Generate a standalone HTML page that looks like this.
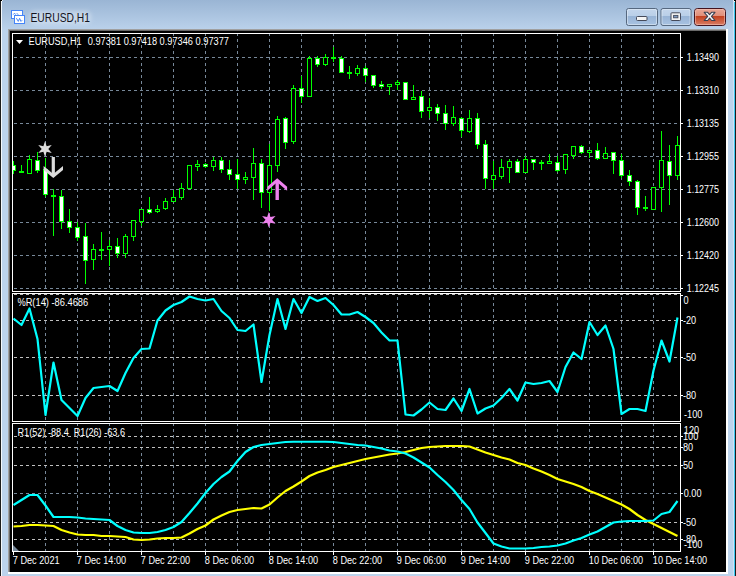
<!DOCTYPE html>
<html><head><meta charset="utf-8"><title>EURUSD,H1</title>
<style>html,body{margin:0;padding:0;background:#000;width:736px;height:576px;overflow:hidden}svg{display:block}text{white-space:pre}</style>
</head><body>
<svg width="736" height="576" viewBox="0 0 736 576" style="position:absolute;left:0;top:0">
<defs>
<linearGradient id="tb" x1="0" y1="0" x2="0" y2="1"><stop offset="0" stop-color="#9ab5d4"/><stop offset="1" stop-color="#bcd3ec"/></linearGradient>
<linearGradient id="btn" x1="0" y1="0" x2="0" y2="1"><stop offset="0" stop-color="#c4d6ec"/><stop offset="0.45" stop-color="#b9cfe8"/><stop offset="0.46" stop-color="#98b4d6"/><stop offset="1" stop-color="#a9c3e2"/></linearGradient>
<linearGradient id="cls" x1="0" y1="0" x2="0" y2="1"><stop offset="0" stop-color="#eaa999"/><stop offset="0.45" stop-color="#e08e78"/><stop offset="0.46" stop-color="#c3411f"/><stop offset="1" stop-color="#da8068"/></linearGradient>
<filter id="glow" x="-20%" y="-80%" width="140%" height="260%"><feGaussianBlur stdDeviation="2.2"/></filter>
<clipPath id="main"><rect x="13" y="34" width="667" height="257"/></clipPath>
<clipPath id="s1"><rect x="13" y="294" width="667" height="127"/></clipPath>
<clipPath id="s2"><rect x="13" y="424" width="667" height="127"/></clipPath>
</defs>
<rect x="0" y="0" width="736" height="576" fill="#000"/>
<rect x="0" y="0" width="736" height="576" fill="#bcd3ec"/>
<rect x="0" y="0" width="736" height="31" fill="url(#tb)"/>
<g shape-rendering="crispEdges">
<rect x="0" y="0" width="1" height="576" fill="#1c1c1c"/>
<rect x="1" y="0" width="1" height="576" fill="#f4f8fc"/>
<rect x="735" y="0" width="1" height="576" fill="#1c1c1c"/>
<rect x="734" y="0" width="1" height="576" fill="#3cc8f0"/>
<rect x="733" y="0" width="1" height="576" fill="#d0e2f4"/>
<rect x="0" y="0" width="2" height="1" fill="#000"/><rect x="1" y="1" width="1" height="1" fill="#fff"/><rect x="2" y="0" width="1" height="1" fill="#e8eef6"/>
<rect x="734" y="0" width="2" height="1" fill="#000"/><rect x="734" y="1" width="1" height="1" fill="#fff"/><rect x="733" y="0" width="1" height="1" fill="#e8eef6"/>
<rect x="8" y="29" width="720" height="545" fill="#fff"/>
<rect x="8" y="29" width="718" height="543" fill="#a0a0a0"/>
<rect x="9" y="30" width="717" height="542" fill="#696969"/>
<rect x="10" y="31" width="716" height="541" fill="#000"/>
</g>
<g shape-rendering="crispEdges" fill="none" stroke-width="1">
<path d="M45.5 34V36M45.5 39V42M45.5 45V48M45.5 51V54M45.5 57V60M45.5 63V66M45.5 69V72M45.5 75V78M45.5 81V84M45.5 87V90M45.5 93V96M45.5 99V102M45.5 105V108M45.5 111V114M45.5 117V120M45.5 123V126M45.5 129V132M45.5 135V138M45.5 141V144M45.5 147V150M45.5 153V156M45.5 159V162M45.5 165V168M45.5 171V174M45.5 177V180M45.5 183V186M45.5 189V192M45.5 195V198M45.5 201V204M45.5 207V210M45.5 213V216M45.5 219V222M45.5 225V228M45.5 231V234M45.5 237V240M45.5 243V246M45.5 249V252M45.5 255V258M45.5 261V264M45.5 267V270M45.5 273V276M45.5 279V282M45.5 285V288" stroke="#778899"/>
<path d="M45.5 297V300M45.5 303V306M45.5 309V312M45.5 315V318M45.5 321V324M45.5 327V330M45.5 333V336M45.5 339V342M45.5 345V348M45.5 351V354M45.5 357V360M45.5 363V366M45.5 369V372M45.5 375V378M45.5 381V384M45.5 387V390M45.5 393V396M45.5 399V402M45.5 405V408M45.5 411V414M45.5 417V420" stroke="#778899"/>
<path d="M45.5 424V426M45.5 429V432M45.5 435V438M45.5 441V444M45.5 447V450M45.5 453V456M45.5 459V462M45.5 465V468M45.5 471V474M45.5 477V480M45.5 483V486M45.5 489V492M45.5 495V498M45.5 501V504M45.5 507V510M45.5 513V516M45.5 519V522M45.5 525V528M45.5 531V534M45.5 537V540M45.5 543V546M45.5 549V551" stroke="#778899"/>
<path d="M77.5 34V36M77.5 39V42M77.5 45V48M77.5 51V54M77.5 57V60M77.5 63V66M77.5 69V72M77.5 75V78M77.5 81V84M77.5 87V90M77.5 93V96M77.5 99V102M77.5 105V108M77.5 111V114M77.5 117V120M77.5 123V126M77.5 129V132M77.5 135V138M77.5 141V144M77.5 147V150M77.5 153V156M77.5 159V162M77.5 165V168M77.5 171V174M77.5 177V180M77.5 183V186M77.5 189V192M77.5 195V198M77.5 201V204M77.5 207V210M77.5 213V216M77.5 219V222M77.5 225V228M77.5 231V234M77.5 237V240M77.5 243V246M77.5 249V252M77.5 255V258M77.5 261V264M77.5 267V270M77.5 273V276M77.5 279V282M77.5 285V288" stroke="#778899"/>
<path d="M77.5 297V300M77.5 303V306M77.5 309V312M77.5 315V318M77.5 321V324M77.5 327V330M77.5 333V336M77.5 339V342M77.5 345V348M77.5 351V354M77.5 357V360M77.5 363V366M77.5 369V372M77.5 375V378M77.5 381V384M77.5 387V390M77.5 393V396M77.5 399V402M77.5 405V408M77.5 411V414M77.5 417V420" stroke="#778899"/>
<path d="M77.5 424V426M77.5 429V432M77.5 435V438M77.5 441V444M77.5 447V450M77.5 453V456M77.5 459V462M77.5 465V468M77.5 471V474M77.5 477V480M77.5 483V486M77.5 489V492M77.5 495V498M77.5 501V504M77.5 507V510M77.5 513V516M77.5 519V522M77.5 525V528M77.5 531V534M77.5 537V540M77.5 543V546M77.5 549V551" stroke="#778899"/>
<path d="M109.5 34V36M109.5 39V42M109.5 45V48M109.5 51V54M109.5 57V60M109.5 63V66M109.5 69V72M109.5 75V78M109.5 81V84M109.5 87V90M109.5 93V96M109.5 99V102M109.5 105V108M109.5 111V114M109.5 117V120M109.5 123V126M109.5 129V132M109.5 135V138M109.5 141V144M109.5 147V150M109.5 153V156M109.5 159V162M109.5 165V168M109.5 171V174M109.5 177V180M109.5 183V186M109.5 189V192M109.5 195V198M109.5 201V204M109.5 207V210M109.5 213V216M109.5 219V222M109.5 225V228M109.5 231V234M109.5 237V240M109.5 243V246M109.5 249V252M109.5 255V258M109.5 261V264M109.5 267V270M109.5 273V276M109.5 279V282M109.5 285V288" stroke="#778899"/>
<path d="M109.5 297V300M109.5 303V306M109.5 309V312M109.5 315V318M109.5 321V324M109.5 327V330M109.5 333V336M109.5 339V342M109.5 345V348M109.5 351V354M109.5 357V360M109.5 363V366M109.5 369V372M109.5 375V378M109.5 381V384M109.5 387V390M109.5 393V396M109.5 399V402M109.5 405V408M109.5 411V414M109.5 417V420" stroke="#778899"/>
<path d="M109.5 424V426M109.5 429V432M109.5 435V438M109.5 441V444M109.5 447V450M109.5 453V456M109.5 459V462M109.5 465V468M109.5 471V474M109.5 477V480M109.5 483V486M109.5 489V492M109.5 495V498M109.5 501V504M109.5 507V510M109.5 513V516M109.5 519V522M109.5 525V528M109.5 531V534M109.5 537V540M109.5 543V546M109.5 549V551" stroke="#778899"/>
<path d="M141.5 34V36M141.5 39V42M141.5 45V48M141.5 51V54M141.5 57V60M141.5 63V66M141.5 69V72M141.5 75V78M141.5 81V84M141.5 87V90M141.5 93V96M141.5 99V102M141.5 105V108M141.5 111V114M141.5 117V120M141.5 123V126M141.5 129V132M141.5 135V138M141.5 141V144M141.5 147V150M141.5 153V156M141.5 159V162M141.5 165V168M141.5 171V174M141.5 177V180M141.5 183V186M141.5 189V192M141.5 195V198M141.5 201V204M141.5 207V210M141.5 213V216M141.5 219V222M141.5 225V228M141.5 231V234M141.5 237V240M141.5 243V246M141.5 249V252M141.5 255V258M141.5 261V264M141.5 267V270M141.5 273V276M141.5 279V282M141.5 285V288" stroke="#778899"/>
<path d="M141.5 297V300M141.5 303V306M141.5 309V312M141.5 315V318M141.5 321V324M141.5 327V330M141.5 333V336M141.5 339V342M141.5 345V348M141.5 351V354M141.5 357V360M141.5 363V366M141.5 369V372M141.5 375V378M141.5 381V384M141.5 387V390M141.5 393V396M141.5 399V402M141.5 405V408M141.5 411V414M141.5 417V420" stroke="#778899"/>
<path d="M141.5 424V426M141.5 429V432M141.5 435V438M141.5 441V444M141.5 447V450M141.5 453V456M141.5 459V462M141.5 465V468M141.5 471V474M141.5 477V480M141.5 483V486M141.5 489V492M141.5 495V498M141.5 501V504M141.5 507V510M141.5 513V516M141.5 519V522M141.5 525V528M141.5 531V534M141.5 537V540M141.5 543V546M141.5 549V551" stroke="#778899"/>
<path d="M173.5 34V36M173.5 39V42M173.5 45V48M173.5 51V54M173.5 57V60M173.5 63V66M173.5 69V72M173.5 75V78M173.5 81V84M173.5 87V90M173.5 93V96M173.5 99V102M173.5 105V108M173.5 111V114M173.5 117V120M173.5 123V126M173.5 129V132M173.5 135V138M173.5 141V144M173.5 147V150M173.5 153V156M173.5 159V162M173.5 165V168M173.5 171V174M173.5 177V180M173.5 183V186M173.5 189V192M173.5 195V198M173.5 201V204M173.5 207V210M173.5 213V216M173.5 219V222M173.5 225V228M173.5 231V234M173.5 237V240M173.5 243V246M173.5 249V252M173.5 255V258M173.5 261V264M173.5 267V270M173.5 273V276M173.5 279V282M173.5 285V288" stroke="#778899"/>
<path d="M173.5 297V300M173.5 303V306M173.5 309V312M173.5 315V318M173.5 321V324M173.5 327V330M173.5 333V336M173.5 339V342M173.5 345V348M173.5 351V354M173.5 357V360M173.5 363V366M173.5 369V372M173.5 375V378M173.5 381V384M173.5 387V390M173.5 393V396M173.5 399V402M173.5 405V408M173.5 411V414M173.5 417V420" stroke="#778899"/>
<path d="M173.5 424V426M173.5 429V432M173.5 435V438M173.5 441V444M173.5 447V450M173.5 453V456M173.5 459V462M173.5 465V468M173.5 471V474M173.5 477V480M173.5 483V486M173.5 489V492M173.5 495V498M173.5 501V504M173.5 507V510M173.5 513V516M173.5 519V522M173.5 525V528M173.5 531V534M173.5 537V540M173.5 543V546M173.5 549V551" stroke="#778899"/>
<path d="M205.5 34V36M205.5 39V42M205.5 45V48M205.5 51V54M205.5 57V60M205.5 63V66M205.5 69V72M205.5 75V78M205.5 81V84M205.5 87V90M205.5 93V96M205.5 99V102M205.5 105V108M205.5 111V114M205.5 117V120M205.5 123V126M205.5 129V132M205.5 135V138M205.5 141V144M205.5 147V150M205.5 153V156M205.5 159V162M205.5 165V168M205.5 171V174M205.5 177V180M205.5 183V186M205.5 189V192M205.5 195V198M205.5 201V204M205.5 207V210M205.5 213V216M205.5 219V222M205.5 225V228M205.5 231V234M205.5 237V240M205.5 243V246M205.5 249V252M205.5 255V258M205.5 261V264M205.5 267V270M205.5 273V276M205.5 279V282M205.5 285V288" stroke="#778899"/>
<path d="M205.5 297V300M205.5 303V306M205.5 309V312M205.5 315V318M205.5 321V324M205.5 327V330M205.5 333V336M205.5 339V342M205.5 345V348M205.5 351V354M205.5 357V360M205.5 363V366M205.5 369V372M205.5 375V378M205.5 381V384M205.5 387V390M205.5 393V396M205.5 399V402M205.5 405V408M205.5 411V414M205.5 417V420" stroke="#778899"/>
<path d="M205.5 424V426M205.5 429V432M205.5 435V438M205.5 441V444M205.5 447V450M205.5 453V456M205.5 459V462M205.5 465V468M205.5 471V474M205.5 477V480M205.5 483V486M205.5 489V492M205.5 495V498M205.5 501V504M205.5 507V510M205.5 513V516M205.5 519V522M205.5 525V528M205.5 531V534M205.5 537V540M205.5 543V546M205.5 549V551" stroke="#778899"/>
<path d="M237.5 34V36M237.5 39V42M237.5 45V48M237.5 51V54M237.5 57V60M237.5 63V66M237.5 69V72M237.5 75V78M237.5 81V84M237.5 87V90M237.5 93V96M237.5 99V102M237.5 105V108M237.5 111V114M237.5 117V120M237.5 123V126M237.5 129V132M237.5 135V138M237.5 141V144M237.5 147V150M237.5 153V156M237.5 159V162M237.5 165V168M237.5 171V174M237.5 177V180M237.5 183V186M237.5 189V192M237.5 195V198M237.5 201V204M237.5 207V210M237.5 213V216M237.5 219V222M237.5 225V228M237.5 231V234M237.5 237V240M237.5 243V246M237.5 249V252M237.5 255V258M237.5 261V264M237.5 267V270M237.5 273V276M237.5 279V282M237.5 285V288" stroke="#778899"/>
<path d="M237.5 297V300M237.5 303V306M237.5 309V312M237.5 315V318M237.5 321V324M237.5 327V330M237.5 333V336M237.5 339V342M237.5 345V348M237.5 351V354M237.5 357V360M237.5 363V366M237.5 369V372M237.5 375V378M237.5 381V384M237.5 387V390M237.5 393V396M237.5 399V402M237.5 405V408M237.5 411V414M237.5 417V420" stroke="#778899"/>
<path d="M237.5 424V426M237.5 429V432M237.5 435V438M237.5 441V444M237.5 447V450M237.5 453V456M237.5 459V462M237.5 465V468M237.5 471V474M237.5 477V480M237.5 483V486M237.5 489V492M237.5 495V498M237.5 501V504M237.5 507V510M237.5 513V516M237.5 519V522M237.5 525V528M237.5 531V534M237.5 537V540M237.5 543V546M237.5 549V551" stroke="#778899"/>
<path d="M269.5 34V36M269.5 39V42M269.5 45V48M269.5 51V54M269.5 57V60M269.5 63V66M269.5 69V72M269.5 75V78M269.5 81V84M269.5 87V90M269.5 93V96M269.5 99V102M269.5 105V108M269.5 111V114M269.5 117V120M269.5 123V126M269.5 129V132M269.5 135V138M269.5 141V144M269.5 147V150M269.5 153V156M269.5 159V162M269.5 165V168M269.5 171V174M269.5 177V180M269.5 183V186M269.5 189V192M269.5 195V198M269.5 201V204M269.5 207V210M269.5 213V216M269.5 219V222M269.5 225V228M269.5 231V234M269.5 237V240M269.5 243V246M269.5 249V252M269.5 255V258M269.5 261V264M269.5 267V270M269.5 273V276M269.5 279V282M269.5 285V288" stroke="#778899"/>
<path d="M269.5 297V300M269.5 303V306M269.5 309V312M269.5 315V318M269.5 321V324M269.5 327V330M269.5 333V336M269.5 339V342M269.5 345V348M269.5 351V354M269.5 357V360M269.5 363V366M269.5 369V372M269.5 375V378M269.5 381V384M269.5 387V390M269.5 393V396M269.5 399V402M269.5 405V408M269.5 411V414M269.5 417V420" stroke="#778899"/>
<path d="M269.5 424V426M269.5 429V432M269.5 435V438M269.5 441V444M269.5 447V450M269.5 453V456M269.5 459V462M269.5 465V468M269.5 471V474M269.5 477V480M269.5 483V486M269.5 489V492M269.5 495V498M269.5 501V504M269.5 507V510M269.5 513V516M269.5 519V522M269.5 525V528M269.5 531V534M269.5 537V540M269.5 543V546M269.5 549V551" stroke="#778899"/>
<path d="M301.5 34V36M301.5 39V42M301.5 45V48M301.5 51V54M301.5 57V60M301.5 63V66M301.5 69V72M301.5 75V78M301.5 81V84M301.5 87V90M301.5 93V96M301.5 99V102M301.5 105V108M301.5 111V114M301.5 117V120M301.5 123V126M301.5 129V132M301.5 135V138M301.5 141V144M301.5 147V150M301.5 153V156M301.5 159V162M301.5 165V168M301.5 171V174M301.5 177V180M301.5 183V186M301.5 189V192M301.5 195V198M301.5 201V204M301.5 207V210M301.5 213V216M301.5 219V222M301.5 225V228M301.5 231V234M301.5 237V240M301.5 243V246M301.5 249V252M301.5 255V258M301.5 261V264M301.5 267V270M301.5 273V276M301.5 279V282M301.5 285V288" stroke="#778899"/>
<path d="M301.5 297V300M301.5 303V306M301.5 309V312M301.5 315V318M301.5 321V324M301.5 327V330M301.5 333V336M301.5 339V342M301.5 345V348M301.5 351V354M301.5 357V360M301.5 363V366M301.5 369V372M301.5 375V378M301.5 381V384M301.5 387V390M301.5 393V396M301.5 399V402M301.5 405V408M301.5 411V414M301.5 417V420" stroke="#778899"/>
<path d="M301.5 424V426M301.5 429V432M301.5 435V438M301.5 441V444M301.5 447V450M301.5 453V456M301.5 459V462M301.5 465V468M301.5 471V474M301.5 477V480M301.5 483V486M301.5 489V492M301.5 495V498M301.5 501V504M301.5 507V510M301.5 513V516M301.5 519V522M301.5 525V528M301.5 531V534M301.5 537V540M301.5 543V546M301.5 549V551" stroke="#778899"/>
<path d="M333.5 34V36M333.5 39V42M333.5 45V48M333.5 51V54M333.5 57V60M333.5 63V66M333.5 69V72M333.5 75V78M333.5 81V84M333.5 87V90M333.5 93V96M333.5 99V102M333.5 105V108M333.5 111V114M333.5 117V120M333.5 123V126M333.5 129V132M333.5 135V138M333.5 141V144M333.5 147V150M333.5 153V156M333.5 159V162M333.5 165V168M333.5 171V174M333.5 177V180M333.5 183V186M333.5 189V192M333.5 195V198M333.5 201V204M333.5 207V210M333.5 213V216M333.5 219V222M333.5 225V228M333.5 231V234M333.5 237V240M333.5 243V246M333.5 249V252M333.5 255V258M333.5 261V264M333.5 267V270M333.5 273V276M333.5 279V282M333.5 285V288" stroke="#778899"/>
<path d="M333.5 297V300M333.5 303V306M333.5 309V312M333.5 315V318M333.5 321V324M333.5 327V330M333.5 333V336M333.5 339V342M333.5 345V348M333.5 351V354M333.5 357V360M333.5 363V366M333.5 369V372M333.5 375V378M333.5 381V384M333.5 387V390M333.5 393V396M333.5 399V402M333.5 405V408M333.5 411V414M333.5 417V420" stroke="#778899"/>
<path d="M333.5 424V426M333.5 429V432M333.5 435V438M333.5 441V444M333.5 447V450M333.5 453V456M333.5 459V462M333.5 465V468M333.5 471V474M333.5 477V480M333.5 483V486M333.5 489V492M333.5 495V498M333.5 501V504M333.5 507V510M333.5 513V516M333.5 519V522M333.5 525V528M333.5 531V534M333.5 537V540M333.5 543V546M333.5 549V551" stroke="#778899"/>
<path d="M365.5 34V36M365.5 39V42M365.5 45V48M365.5 51V54M365.5 57V60M365.5 63V66M365.5 69V72M365.5 75V78M365.5 81V84M365.5 87V90M365.5 93V96M365.5 99V102M365.5 105V108M365.5 111V114M365.5 117V120M365.5 123V126M365.5 129V132M365.5 135V138M365.5 141V144M365.5 147V150M365.5 153V156M365.5 159V162M365.5 165V168M365.5 171V174M365.5 177V180M365.5 183V186M365.5 189V192M365.5 195V198M365.5 201V204M365.5 207V210M365.5 213V216M365.5 219V222M365.5 225V228M365.5 231V234M365.5 237V240M365.5 243V246M365.5 249V252M365.5 255V258M365.5 261V264M365.5 267V270M365.5 273V276M365.5 279V282M365.5 285V288" stroke="#778899"/>
<path d="M365.5 297V300M365.5 303V306M365.5 309V312M365.5 315V318M365.5 321V324M365.5 327V330M365.5 333V336M365.5 339V342M365.5 345V348M365.5 351V354M365.5 357V360M365.5 363V366M365.5 369V372M365.5 375V378M365.5 381V384M365.5 387V390M365.5 393V396M365.5 399V402M365.5 405V408M365.5 411V414M365.5 417V420" stroke="#778899"/>
<path d="M365.5 424V426M365.5 429V432M365.5 435V438M365.5 441V444M365.5 447V450M365.5 453V456M365.5 459V462M365.5 465V468M365.5 471V474M365.5 477V480M365.5 483V486M365.5 489V492M365.5 495V498M365.5 501V504M365.5 507V510M365.5 513V516M365.5 519V522M365.5 525V528M365.5 531V534M365.5 537V540M365.5 543V546M365.5 549V551" stroke="#778899"/>
<path d="M397.5 34V36M397.5 39V42M397.5 45V48M397.5 51V54M397.5 57V60M397.5 63V66M397.5 69V72M397.5 75V78M397.5 81V84M397.5 87V90M397.5 93V96M397.5 99V102M397.5 105V108M397.5 111V114M397.5 117V120M397.5 123V126M397.5 129V132M397.5 135V138M397.5 141V144M397.5 147V150M397.5 153V156M397.5 159V162M397.5 165V168M397.5 171V174M397.5 177V180M397.5 183V186M397.5 189V192M397.5 195V198M397.5 201V204M397.5 207V210M397.5 213V216M397.5 219V222M397.5 225V228M397.5 231V234M397.5 237V240M397.5 243V246M397.5 249V252M397.5 255V258M397.5 261V264M397.5 267V270M397.5 273V276M397.5 279V282M397.5 285V288" stroke="#778899"/>
<path d="M397.5 297V300M397.5 303V306M397.5 309V312M397.5 315V318M397.5 321V324M397.5 327V330M397.5 333V336M397.5 339V342M397.5 345V348M397.5 351V354M397.5 357V360M397.5 363V366M397.5 369V372M397.5 375V378M397.5 381V384M397.5 387V390M397.5 393V396M397.5 399V402M397.5 405V408M397.5 411V414M397.5 417V420" stroke="#778899"/>
<path d="M397.5 424V426M397.5 429V432M397.5 435V438M397.5 441V444M397.5 447V450M397.5 453V456M397.5 459V462M397.5 465V468M397.5 471V474M397.5 477V480M397.5 483V486M397.5 489V492M397.5 495V498M397.5 501V504M397.5 507V510M397.5 513V516M397.5 519V522M397.5 525V528M397.5 531V534M397.5 537V540M397.5 543V546M397.5 549V551" stroke="#778899"/>
<path d="M429.5 34V36M429.5 39V42M429.5 45V48M429.5 51V54M429.5 57V60M429.5 63V66M429.5 69V72M429.5 75V78M429.5 81V84M429.5 87V90M429.5 93V96M429.5 99V102M429.5 105V108M429.5 111V114M429.5 117V120M429.5 123V126M429.5 129V132M429.5 135V138M429.5 141V144M429.5 147V150M429.5 153V156M429.5 159V162M429.5 165V168M429.5 171V174M429.5 177V180M429.5 183V186M429.5 189V192M429.5 195V198M429.5 201V204M429.5 207V210M429.5 213V216M429.5 219V222M429.5 225V228M429.5 231V234M429.5 237V240M429.5 243V246M429.5 249V252M429.5 255V258M429.5 261V264M429.5 267V270M429.5 273V276M429.5 279V282M429.5 285V288" stroke="#778899"/>
<path d="M429.5 297V300M429.5 303V306M429.5 309V312M429.5 315V318M429.5 321V324M429.5 327V330M429.5 333V336M429.5 339V342M429.5 345V348M429.5 351V354M429.5 357V360M429.5 363V366M429.5 369V372M429.5 375V378M429.5 381V384M429.5 387V390M429.5 393V396M429.5 399V402M429.5 405V408M429.5 411V414M429.5 417V420" stroke="#778899"/>
<path d="M429.5 424V426M429.5 429V432M429.5 435V438M429.5 441V444M429.5 447V450M429.5 453V456M429.5 459V462M429.5 465V468M429.5 471V474M429.5 477V480M429.5 483V486M429.5 489V492M429.5 495V498M429.5 501V504M429.5 507V510M429.5 513V516M429.5 519V522M429.5 525V528M429.5 531V534M429.5 537V540M429.5 543V546M429.5 549V551" stroke="#778899"/>
<path d="M461.5 34V36M461.5 39V42M461.5 45V48M461.5 51V54M461.5 57V60M461.5 63V66M461.5 69V72M461.5 75V78M461.5 81V84M461.5 87V90M461.5 93V96M461.5 99V102M461.5 105V108M461.5 111V114M461.5 117V120M461.5 123V126M461.5 129V132M461.5 135V138M461.5 141V144M461.5 147V150M461.5 153V156M461.5 159V162M461.5 165V168M461.5 171V174M461.5 177V180M461.5 183V186M461.5 189V192M461.5 195V198M461.5 201V204M461.5 207V210M461.5 213V216M461.5 219V222M461.5 225V228M461.5 231V234M461.5 237V240M461.5 243V246M461.5 249V252M461.5 255V258M461.5 261V264M461.5 267V270M461.5 273V276M461.5 279V282M461.5 285V288" stroke="#778899"/>
<path d="M461.5 297V300M461.5 303V306M461.5 309V312M461.5 315V318M461.5 321V324M461.5 327V330M461.5 333V336M461.5 339V342M461.5 345V348M461.5 351V354M461.5 357V360M461.5 363V366M461.5 369V372M461.5 375V378M461.5 381V384M461.5 387V390M461.5 393V396M461.5 399V402M461.5 405V408M461.5 411V414M461.5 417V420" stroke="#778899"/>
<path d="M461.5 424V426M461.5 429V432M461.5 435V438M461.5 441V444M461.5 447V450M461.5 453V456M461.5 459V462M461.5 465V468M461.5 471V474M461.5 477V480M461.5 483V486M461.5 489V492M461.5 495V498M461.5 501V504M461.5 507V510M461.5 513V516M461.5 519V522M461.5 525V528M461.5 531V534M461.5 537V540M461.5 543V546M461.5 549V551" stroke="#778899"/>
<path d="M493.5 34V36M493.5 39V42M493.5 45V48M493.5 51V54M493.5 57V60M493.5 63V66M493.5 69V72M493.5 75V78M493.5 81V84M493.5 87V90M493.5 93V96M493.5 99V102M493.5 105V108M493.5 111V114M493.5 117V120M493.5 123V126M493.5 129V132M493.5 135V138M493.5 141V144M493.5 147V150M493.5 153V156M493.5 159V162M493.5 165V168M493.5 171V174M493.5 177V180M493.5 183V186M493.5 189V192M493.5 195V198M493.5 201V204M493.5 207V210M493.5 213V216M493.5 219V222M493.5 225V228M493.5 231V234M493.5 237V240M493.5 243V246M493.5 249V252M493.5 255V258M493.5 261V264M493.5 267V270M493.5 273V276M493.5 279V282M493.5 285V288" stroke="#778899"/>
<path d="M493.5 297V300M493.5 303V306M493.5 309V312M493.5 315V318M493.5 321V324M493.5 327V330M493.5 333V336M493.5 339V342M493.5 345V348M493.5 351V354M493.5 357V360M493.5 363V366M493.5 369V372M493.5 375V378M493.5 381V384M493.5 387V390M493.5 393V396M493.5 399V402M493.5 405V408M493.5 411V414M493.5 417V420" stroke="#778899"/>
<path d="M493.5 424V426M493.5 429V432M493.5 435V438M493.5 441V444M493.5 447V450M493.5 453V456M493.5 459V462M493.5 465V468M493.5 471V474M493.5 477V480M493.5 483V486M493.5 489V492M493.5 495V498M493.5 501V504M493.5 507V510M493.5 513V516M493.5 519V522M493.5 525V528M493.5 531V534M493.5 537V540M493.5 543V546M493.5 549V551" stroke="#778899"/>
<path d="M525.5 34V36M525.5 39V42M525.5 45V48M525.5 51V54M525.5 57V60M525.5 63V66M525.5 69V72M525.5 75V78M525.5 81V84M525.5 87V90M525.5 93V96M525.5 99V102M525.5 105V108M525.5 111V114M525.5 117V120M525.5 123V126M525.5 129V132M525.5 135V138M525.5 141V144M525.5 147V150M525.5 153V156M525.5 159V162M525.5 165V168M525.5 171V174M525.5 177V180M525.5 183V186M525.5 189V192M525.5 195V198M525.5 201V204M525.5 207V210M525.5 213V216M525.5 219V222M525.5 225V228M525.5 231V234M525.5 237V240M525.5 243V246M525.5 249V252M525.5 255V258M525.5 261V264M525.5 267V270M525.5 273V276M525.5 279V282M525.5 285V288" stroke="#778899"/>
<path d="M525.5 297V300M525.5 303V306M525.5 309V312M525.5 315V318M525.5 321V324M525.5 327V330M525.5 333V336M525.5 339V342M525.5 345V348M525.5 351V354M525.5 357V360M525.5 363V366M525.5 369V372M525.5 375V378M525.5 381V384M525.5 387V390M525.5 393V396M525.5 399V402M525.5 405V408M525.5 411V414M525.5 417V420" stroke="#778899"/>
<path d="M525.5 424V426M525.5 429V432M525.5 435V438M525.5 441V444M525.5 447V450M525.5 453V456M525.5 459V462M525.5 465V468M525.5 471V474M525.5 477V480M525.5 483V486M525.5 489V492M525.5 495V498M525.5 501V504M525.5 507V510M525.5 513V516M525.5 519V522M525.5 525V528M525.5 531V534M525.5 537V540M525.5 543V546M525.5 549V551" stroke="#778899"/>
<path d="M557.5 34V36M557.5 39V42M557.5 45V48M557.5 51V54M557.5 57V60M557.5 63V66M557.5 69V72M557.5 75V78M557.5 81V84M557.5 87V90M557.5 93V96M557.5 99V102M557.5 105V108M557.5 111V114M557.5 117V120M557.5 123V126M557.5 129V132M557.5 135V138M557.5 141V144M557.5 147V150M557.5 153V156M557.5 159V162M557.5 165V168M557.5 171V174M557.5 177V180M557.5 183V186M557.5 189V192M557.5 195V198M557.5 201V204M557.5 207V210M557.5 213V216M557.5 219V222M557.5 225V228M557.5 231V234M557.5 237V240M557.5 243V246M557.5 249V252M557.5 255V258M557.5 261V264M557.5 267V270M557.5 273V276M557.5 279V282M557.5 285V288" stroke="#778899"/>
<path d="M557.5 297V300M557.5 303V306M557.5 309V312M557.5 315V318M557.5 321V324M557.5 327V330M557.5 333V336M557.5 339V342M557.5 345V348M557.5 351V354M557.5 357V360M557.5 363V366M557.5 369V372M557.5 375V378M557.5 381V384M557.5 387V390M557.5 393V396M557.5 399V402M557.5 405V408M557.5 411V414M557.5 417V420" stroke="#778899"/>
<path d="M557.5 424V426M557.5 429V432M557.5 435V438M557.5 441V444M557.5 447V450M557.5 453V456M557.5 459V462M557.5 465V468M557.5 471V474M557.5 477V480M557.5 483V486M557.5 489V492M557.5 495V498M557.5 501V504M557.5 507V510M557.5 513V516M557.5 519V522M557.5 525V528M557.5 531V534M557.5 537V540M557.5 543V546M557.5 549V551" stroke="#778899"/>
<path d="M589.5 34V36M589.5 39V42M589.5 45V48M589.5 51V54M589.5 57V60M589.5 63V66M589.5 69V72M589.5 75V78M589.5 81V84M589.5 87V90M589.5 93V96M589.5 99V102M589.5 105V108M589.5 111V114M589.5 117V120M589.5 123V126M589.5 129V132M589.5 135V138M589.5 141V144M589.5 147V150M589.5 153V156M589.5 159V162M589.5 165V168M589.5 171V174M589.5 177V180M589.5 183V186M589.5 189V192M589.5 195V198M589.5 201V204M589.5 207V210M589.5 213V216M589.5 219V222M589.5 225V228M589.5 231V234M589.5 237V240M589.5 243V246M589.5 249V252M589.5 255V258M589.5 261V264M589.5 267V270M589.5 273V276M589.5 279V282M589.5 285V288" stroke="#778899"/>
<path d="M589.5 297V300M589.5 303V306M589.5 309V312M589.5 315V318M589.5 321V324M589.5 327V330M589.5 333V336M589.5 339V342M589.5 345V348M589.5 351V354M589.5 357V360M589.5 363V366M589.5 369V372M589.5 375V378M589.5 381V384M589.5 387V390M589.5 393V396M589.5 399V402M589.5 405V408M589.5 411V414M589.5 417V420" stroke="#778899"/>
<path d="M589.5 424V426M589.5 429V432M589.5 435V438M589.5 441V444M589.5 447V450M589.5 453V456M589.5 459V462M589.5 465V468M589.5 471V474M589.5 477V480M589.5 483V486M589.5 489V492M589.5 495V498M589.5 501V504M589.5 507V510M589.5 513V516M589.5 519V522M589.5 525V528M589.5 531V534M589.5 537V540M589.5 543V546M589.5 549V551" stroke="#778899"/>
<path d="M621.5 34V36M621.5 39V42M621.5 45V48M621.5 51V54M621.5 57V60M621.5 63V66M621.5 69V72M621.5 75V78M621.5 81V84M621.5 87V90M621.5 93V96M621.5 99V102M621.5 105V108M621.5 111V114M621.5 117V120M621.5 123V126M621.5 129V132M621.5 135V138M621.5 141V144M621.5 147V150M621.5 153V156M621.5 159V162M621.5 165V168M621.5 171V174M621.5 177V180M621.5 183V186M621.5 189V192M621.5 195V198M621.5 201V204M621.5 207V210M621.5 213V216M621.5 219V222M621.5 225V228M621.5 231V234M621.5 237V240M621.5 243V246M621.5 249V252M621.5 255V258M621.5 261V264M621.5 267V270M621.5 273V276M621.5 279V282M621.5 285V288" stroke="#778899"/>
<path d="M621.5 297V300M621.5 303V306M621.5 309V312M621.5 315V318M621.5 321V324M621.5 327V330M621.5 333V336M621.5 339V342M621.5 345V348M621.5 351V354M621.5 357V360M621.5 363V366M621.5 369V372M621.5 375V378M621.5 381V384M621.5 387V390M621.5 393V396M621.5 399V402M621.5 405V408M621.5 411V414M621.5 417V420" stroke="#778899"/>
<path d="M621.5 424V426M621.5 429V432M621.5 435V438M621.5 441V444M621.5 447V450M621.5 453V456M621.5 459V462M621.5 465V468M621.5 471V474M621.5 477V480M621.5 483V486M621.5 489V492M621.5 495V498M621.5 501V504M621.5 507V510M621.5 513V516M621.5 519V522M621.5 525V528M621.5 531V534M621.5 537V540M621.5 543V546M621.5 549V551" stroke="#778899"/>
<path d="M653.5 34V36M653.5 39V42M653.5 45V48M653.5 51V54M653.5 57V60M653.5 63V66M653.5 69V72M653.5 75V78M653.5 81V84M653.5 87V90M653.5 93V96M653.5 99V102M653.5 105V108M653.5 111V114M653.5 117V120M653.5 123V126M653.5 129V132M653.5 135V138M653.5 141V144M653.5 147V150M653.5 153V156M653.5 159V162M653.5 165V168M653.5 171V174M653.5 177V180M653.5 183V186M653.5 189V192M653.5 195V198M653.5 201V204M653.5 207V210M653.5 213V216M653.5 219V222M653.5 225V228M653.5 231V234M653.5 237V240M653.5 243V246M653.5 249V252M653.5 255V258M653.5 261V264M653.5 267V270M653.5 273V276M653.5 279V282M653.5 285V288" stroke="#778899"/>
<path d="M653.5 297V300M653.5 303V306M653.5 309V312M653.5 315V318M653.5 321V324M653.5 327V330M653.5 333V336M653.5 339V342M653.5 345V348M653.5 351V354M653.5 357V360M653.5 363V366M653.5 369V372M653.5 375V378M653.5 381V384M653.5 387V390M653.5 393V396M653.5 399V402M653.5 405V408M653.5 411V414M653.5 417V420" stroke="#778899"/>
<path d="M653.5 424V426M653.5 429V432M653.5 435V438M653.5 441V444M653.5 447V450M653.5 453V456M653.5 459V462M653.5 465V468M653.5 471V474M653.5 477V480M653.5 483V486M653.5 489V492M653.5 495V498M653.5 501V504M653.5 507V510M653.5 513V516M653.5 519V522M653.5 525V528M653.5 531V534M653.5 537V540M653.5 543V546M653.5 549V551" stroke="#778899"/>
<path d="M14 57.5H17M20 57.5H23M26 57.5H29M32 57.5H35M38 57.5H41M44 57.5H47M50 57.5H53M56 57.5H59M62 57.5H65M68 57.5H71M74 57.5H77M80 57.5H83M86 57.5H89M92 57.5H95M98 57.5H101M104 57.5H107M110 57.5H113M116 57.5H119M122 57.5H125M128 57.5H131M134 57.5H137M140 57.5H143M146 57.5H149M152 57.5H155M158 57.5H161M164 57.5H167M170 57.5H173M176 57.5H179M182 57.5H185M188 57.5H191M194 57.5H197M200 57.5H203M206 57.5H209M212 57.5H215M218 57.5H221M224 57.5H227M230 57.5H233M236 57.5H239M242 57.5H245M248 57.5H251M254 57.5H257M260 57.5H263M266 57.5H269M272 57.5H275M278 57.5H281M284 57.5H287M290 57.5H293M296 57.5H299M302 57.5H305M308 57.5H311M314 57.5H317M320 57.5H323M326 57.5H329M332 57.5H335M338 57.5H341M344 57.5H347M350 57.5H353M356 57.5H359M362 57.5H365M368 57.5H371M374 57.5H377M380 57.5H383M386 57.5H389M392 57.5H395M398 57.5H401M404 57.5H407M410 57.5H413M416 57.5H419M422 57.5H425M428 57.5H431M434 57.5H437M440 57.5H443M446 57.5H449M452 57.5H455M458 57.5H461M464 57.5H467M470 57.5H473M476 57.5H479M482 57.5H485M488 57.5H491M494 57.5H497M500 57.5H503M506 57.5H509M512 57.5H515M518 57.5H521M524 57.5H527M530 57.5H533M536 57.5H539M542 57.5H545M548 57.5H551M554 57.5H557M560 57.5H563M566 57.5H569M572 57.5H575M578 57.5H581M584 57.5H587M590 57.5H593M596 57.5H599M602 57.5H605M608 57.5H611M614 57.5H617M620 57.5H623M626 57.5H629M632 57.5H635M638 57.5H641M644 57.5H647M650 57.5H653M656 57.5H659M662 57.5H665M668 57.5H671M674 57.5H677" stroke="#778899"/>
<path d="M14 90.5H17M20 90.5H23M26 90.5H29M32 90.5H35M38 90.5H41M44 90.5H47M50 90.5H53M56 90.5H59M62 90.5H65M68 90.5H71M74 90.5H77M80 90.5H83M86 90.5H89M92 90.5H95M98 90.5H101M104 90.5H107M110 90.5H113M116 90.5H119M122 90.5H125M128 90.5H131M134 90.5H137M140 90.5H143M146 90.5H149M152 90.5H155M158 90.5H161M164 90.5H167M170 90.5H173M176 90.5H179M182 90.5H185M188 90.5H191M194 90.5H197M200 90.5H203M206 90.5H209M212 90.5H215M218 90.5H221M224 90.5H227M230 90.5H233M236 90.5H239M242 90.5H245M248 90.5H251M254 90.5H257M260 90.5H263M266 90.5H269M272 90.5H275M278 90.5H281M284 90.5H287M290 90.5H293M296 90.5H299M302 90.5H305M308 90.5H311M314 90.5H317M320 90.5H323M326 90.5H329M332 90.5H335M338 90.5H341M344 90.5H347M350 90.5H353M356 90.5H359M362 90.5H365M368 90.5H371M374 90.5H377M380 90.5H383M386 90.5H389M392 90.5H395M398 90.5H401M404 90.5H407M410 90.5H413M416 90.5H419M422 90.5H425M428 90.5H431M434 90.5H437M440 90.5H443M446 90.5H449M452 90.5H455M458 90.5H461M464 90.5H467M470 90.5H473M476 90.5H479M482 90.5H485M488 90.5H491M494 90.5H497M500 90.5H503M506 90.5H509M512 90.5H515M518 90.5H521M524 90.5H527M530 90.5H533M536 90.5H539M542 90.5H545M548 90.5H551M554 90.5H557M560 90.5H563M566 90.5H569M572 90.5H575M578 90.5H581M584 90.5H587M590 90.5H593M596 90.5H599M602 90.5H605M608 90.5H611M614 90.5H617M620 90.5H623M626 90.5H629M632 90.5H635M638 90.5H641M644 90.5H647M650 90.5H653M656 90.5H659M662 90.5H665M668 90.5H671M674 90.5H677" stroke="#778899"/>
<path d="M14 123.5H17M20 123.5H23M26 123.5H29M32 123.5H35M38 123.5H41M44 123.5H47M50 123.5H53M56 123.5H59M62 123.5H65M68 123.5H71M74 123.5H77M80 123.5H83M86 123.5H89M92 123.5H95M98 123.5H101M104 123.5H107M110 123.5H113M116 123.5H119M122 123.5H125M128 123.5H131M134 123.5H137M140 123.5H143M146 123.5H149M152 123.5H155M158 123.5H161M164 123.5H167M170 123.5H173M176 123.5H179M182 123.5H185M188 123.5H191M194 123.5H197M200 123.5H203M206 123.5H209M212 123.5H215M218 123.5H221M224 123.5H227M230 123.5H233M236 123.5H239M242 123.5H245M248 123.5H251M254 123.5H257M260 123.5H263M266 123.5H269M272 123.5H275M278 123.5H281M284 123.5H287M290 123.5H293M296 123.5H299M302 123.5H305M308 123.5H311M314 123.5H317M320 123.5H323M326 123.5H329M332 123.5H335M338 123.5H341M344 123.5H347M350 123.5H353M356 123.5H359M362 123.5H365M368 123.5H371M374 123.5H377M380 123.5H383M386 123.5H389M392 123.5H395M398 123.5H401M404 123.5H407M410 123.5H413M416 123.5H419M422 123.5H425M428 123.5H431M434 123.5H437M440 123.5H443M446 123.5H449M452 123.5H455M458 123.5H461M464 123.5H467M470 123.5H473M476 123.5H479M482 123.5H485M488 123.5H491M494 123.5H497M500 123.5H503M506 123.5H509M512 123.5H515M518 123.5H521M524 123.5H527M530 123.5H533M536 123.5H539M542 123.5H545M548 123.5H551M554 123.5H557M560 123.5H563M566 123.5H569M572 123.5H575M578 123.5H581M584 123.5H587M590 123.5H593M596 123.5H599M602 123.5H605M608 123.5H611M614 123.5H617M620 123.5H623M626 123.5H629M632 123.5H635M638 123.5H641M644 123.5H647M650 123.5H653M656 123.5H659M662 123.5H665M668 123.5H671M674 123.5H677" stroke="#778899"/>
<path d="M14 156.5H17M20 156.5H23M26 156.5H29M32 156.5H35M38 156.5H41M44 156.5H47M50 156.5H53M56 156.5H59M62 156.5H65M68 156.5H71M74 156.5H77M80 156.5H83M86 156.5H89M92 156.5H95M98 156.5H101M104 156.5H107M110 156.5H113M116 156.5H119M122 156.5H125M128 156.5H131M134 156.5H137M140 156.5H143M146 156.5H149M152 156.5H155M158 156.5H161M164 156.5H167M170 156.5H173M176 156.5H179M182 156.5H185M188 156.5H191M194 156.5H197M200 156.5H203M206 156.5H209M212 156.5H215M218 156.5H221M224 156.5H227M230 156.5H233M236 156.5H239M242 156.5H245M248 156.5H251M254 156.5H257M260 156.5H263M266 156.5H269M272 156.5H275M278 156.5H281M284 156.5H287M290 156.5H293M296 156.5H299M302 156.5H305M308 156.5H311M314 156.5H317M320 156.5H323M326 156.5H329M332 156.5H335M338 156.5H341M344 156.5H347M350 156.5H353M356 156.5H359M362 156.5H365M368 156.5H371M374 156.5H377M380 156.5H383M386 156.5H389M392 156.5H395M398 156.5H401M404 156.5H407M410 156.5H413M416 156.5H419M422 156.5H425M428 156.5H431M434 156.5H437M440 156.5H443M446 156.5H449M452 156.5H455M458 156.5H461M464 156.5H467M470 156.5H473M476 156.5H479M482 156.5H485M488 156.5H491M494 156.5H497M500 156.5H503M506 156.5H509M512 156.5H515M518 156.5H521M524 156.5H527M530 156.5H533M536 156.5H539M542 156.5H545M548 156.5H551M554 156.5H557M560 156.5H563M566 156.5H569M572 156.5H575M578 156.5H581M584 156.5H587M590 156.5H593M596 156.5H599M602 156.5H605M608 156.5H611M614 156.5H617M620 156.5H623M626 156.5H629M632 156.5H635M638 156.5H641M644 156.5H647M650 156.5H653M656 156.5H659M662 156.5H665M668 156.5H671M674 156.5H677" stroke="#778899"/>
<path d="M14 189.5H17M20 189.5H23M26 189.5H29M32 189.5H35M38 189.5H41M44 189.5H47M50 189.5H53M56 189.5H59M62 189.5H65M68 189.5H71M74 189.5H77M80 189.5H83M86 189.5H89M92 189.5H95M98 189.5H101M104 189.5H107M110 189.5H113M116 189.5H119M122 189.5H125M128 189.5H131M134 189.5H137M140 189.5H143M146 189.5H149M152 189.5H155M158 189.5H161M164 189.5H167M170 189.5H173M176 189.5H179M182 189.5H185M188 189.5H191M194 189.5H197M200 189.5H203M206 189.5H209M212 189.5H215M218 189.5H221M224 189.5H227M230 189.5H233M236 189.5H239M242 189.5H245M248 189.5H251M254 189.5H257M260 189.5H263M266 189.5H269M272 189.5H275M278 189.5H281M284 189.5H287M290 189.5H293M296 189.5H299M302 189.5H305M308 189.5H311M314 189.5H317M320 189.5H323M326 189.5H329M332 189.5H335M338 189.5H341M344 189.5H347M350 189.5H353M356 189.5H359M362 189.5H365M368 189.5H371M374 189.5H377M380 189.5H383M386 189.5H389M392 189.5H395M398 189.5H401M404 189.5H407M410 189.5H413M416 189.5H419M422 189.5H425M428 189.5H431M434 189.5H437M440 189.5H443M446 189.5H449M452 189.5H455M458 189.5H461M464 189.5H467M470 189.5H473M476 189.5H479M482 189.5H485M488 189.5H491M494 189.5H497M500 189.5H503M506 189.5H509M512 189.5H515M518 189.5H521M524 189.5H527M530 189.5H533M536 189.5H539M542 189.5H545M548 189.5H551M554 189.5H557M560 189.5H563M566 189.5H569M572 189.5H575M578 189.5H581M584 189.5H587M590 189.5H593M596 189.5H599M602 189.5H605M608 189.5H611M614 189.5H617M620 189.5H623M626 189.5H629M632 189.5H635M638 189.5H641M644 189.5H647M650 189.5H653M656 189.5H659M662 189.5H665M668 189.5H671M674 189.5H677" stroke="#778899"/>
<path d="M14 222.5H17M20 222.5H23M26 222.5H29M32 222.5H35M38 222.5H41M44 222.5H47M50 222.5H53M56 222.5H59M62 222.5H65M68 222.5H71M74 222.5H77M80 222.5H83M86 222.5H89M92 222.5H95M98 222.5H101M104 222.5H107M110 222.5H113M116 222.5H119M122 222.5H125M128 222.5H131M134 222.5H137M140 222.5H143M146 222.5H149M152 222.5H155M158 222.5H161M164 222.5H167M170 222.5H173M176 222.5H179M182 222.5H185M188 222.5H191M194 222.5H197M200 222.5H203M206 222.5H209M212 222.5H215M218 222.5H221M224 222.5H227M230 222.5H233M236 222.5H239M242 222.5H245M248 222.5H251M254 222.5H257M260 222.5H263M266 222.5H269M272 222.5H275M278 222.5H281M284 222.5H287M290 222.5H293M296 222.5H299M302 222.5H305M308 222.5H311M314 222.5H317M320 222.5H323M326 222.5H329M332 222.5H335M338 222.5H341M344 222.5H347M350 222.5H353M356 222.5H359M362 222.5H365M368 222.5H371M374 222.5H377M380 222.5H383M386 222.5H389M392 222.5H395M398 222.5H401M404 222.5H407M410 222.5H413M416 222.5H419M422 222.5H425M428 222.5H431M434 222.5H437M440 222.5H443M446 222.5H449M452 222.5H455M458 222.5H461M464 222.5H467M470 222.5H473M476 222.5H479M482 222.5H485M488 222.5H491M494 222.5H497M500 222.5H503M506 222.5H509M512 222.5H515M518 222.5H521M524 222.5H527M530 222.5H533M536 222.5H539M542 222.5H545M548 222.5H551M554 222.5H557M560 222.5H563M566 222.5H569M572 222.5H575M578 222.5H581M584 222.5H587M590 222.5H593M596 222.5H599M602 222.5H605M608 222.5H611M614 222.5H617M620 222.5H623M626 222.5H629M632 222.5H635M638 222.5H641M644 222.5H647M650 222.5H653M656 222.5H659M662 222.5H665M668 222.5H671M674 222.5H677" stroke="#778899"/>
<path d="M14 255.5H17M20 255.5H23M26 255.5H29M32 255.5H35M38 255.5H41M44 255.5H47M50 255.5H53M56 255.5H59M62 255.5H65M68 255.5H71M74 255.5H77M80 255.5H83M86 255.5H89M92 255.5H95M98 255.5H101M104 255.5H107M110 255.5H113M116 255.5H119M122 255.5H125M128 255.5H131M134 255.5H137M140 255.5H143M146 255.5H149M152 255.5H155M158 255.5H161M164 255.5H167M170 255.5H173M176 255.5H179M182 255.5H185M188 255.5H191M194 255.5H197M200 255.5H203M206 255.5H209M212 255.5H215M218 255.5H221M224 255.5H227M230 255.5H233M236 255.5H239M242 255.5H245M248 255.5H251M254 255.5H257M260 255.5H263M266 255.5H269M272 255.5H275M278 255.5H281M284 255.5H287M290 255.5H293M296 255.5H299M302 255.5H305M308 255.5H311M314 255.5H317M320 255.5H323M326 255.5H329M332 255.5H335M338 255.5H341M344 255.5H347M350 255.5H353M356 255.5H359M362 255.5H365M368 255.5H371M374 255.5H377M380 255.5H383M386 255.5H389M392 255.5H395M398 255.5H401M404 255.5H407M410 255.5H413M416 255.5H419M422 255.5H425M428 255.5H431M434 255.5H437M440 255.5H443M446 255.5H449M452 255.5H455M458 255.5H461M464 255.5H467M470 255.5H473M476 255.5H479M482 255.5H485M488 255.5H491M494 255.5H497M500 255.5H503M506 255.5H509M512 255.5H515M518 255.5H521M524 255.5H527M530 255.5H533M536 255.5H539M542 255.5H545M548 255.5H551M554 255.5H557M560 255.5H563M566 255.5H569M572 255.5H575M578 255.5H581M584 255.5H587M590 255.5H593M596 255.5H599M602 255.5H605M608 255.5H611M614 255.5H617M620 255.5H623M626 255.5H629M632 255.5H635M638 255.5H641M644 255.5H647M650 255.5H653M656 255.5H659M662 255.5H665M668 255.5H671M674 255.5H677" stroke="#778899"/>
<path d="M14 288.5H17M20 288.5H23M26 288.5H29M32 288.5H35M38 288.5H41M44 288.5H47M50 288.5H53M56 288.5H59M62 288.5H65M68 288.5H71M74 288.5H77M80 288.5H83M86 288.5H89M92 288.5H95M98 288.5H101M104 288.5H107M110 288.5H113M116 288.5H119M122 288.5H125M128 288.5H131M134 288.5H137M140 288.5H143M146 288.5H149M152 288.5H155M158 288.5H161M164 288.5H167M170 288.5H173M176 288.5H179M182 288.5H185M188 288.5H191M194 288.5H197M200 288.5H203M206 288.5H209M212 288.5H215M218 288.5H221M224 288.5H227M230 288.5H233M236 288.5H239M242 288.5H245M248 288.5H251M254 288.5H257M260 288.5H263M266 288.5H269M272 288.5H275M278 288.5H281M284 288.5H287M290 288.5H293M296 288.5H299M302 288.5H305M308 288.5H311M314 288.5H317M320 288.5H323M326 288.5H329M332 288.5H335M338 288.5H341M344 288.5H347M350 288.5H353M356 288.5H359M362 288.5H365M368 288.5H371M374 288.5H377M380 288.5H383M386 288.5H389M392 288.5H395M398 288.5H401M404 288.5H407M410 288.5H413M416 288.5H419M422 288.5H425M428 288.5H431M434 288.5H437M440 288.5H443M446 288.5H449M452 288.5H455M458 288.5H461M464 288.5H467M470 288.5H473M476 288.5H479M482 288.5H485M488 288.5H491M494 288.5H497M500 288.5H503M506 288.5H509M512 288.5H515M518 288.5H521M524 288.5H527M530 288.5H533M536 288.5H539M542 288.5H545M548 288.5H551M554 288.5H557M560 288.5H563M566 288.5H569M572 288.5H575M578 288.5H581M584 288.5H587M590 288.5H593M596 288.5H599M602 288.5H605M608 288.5H611M614 288.5H617M620 288.5H623M626 288.5H629M632 288.5H635M638 288.5H641M644 288.5H647M650 288.5H653M656 288.5H659M662 288.5H665M668 288.5H671M674 288.5H677" stroke="#778899"/>
<path d="M14 294.5H17M20 294.5H23M26 294.5H29M32 294.5H35M38 294.5H41M44 294.5H47M50 294.5H53M56 294.5H59M62 294.5H65M68 294.5H71M74 294.5H77M80 294.5H83M86 294.5H89M92 294.5H95M98 294.5H101M104 294.5H107M110 294.5H113M116 294.5H119M122 294.5H125M128 294.5H131M134 294.5H137M140 294.5H143M146 294.5H149M152 294.5H155M158 294.5H161M164 294.5H167M170 294.5H173M176 294.5H179M182 294.5H185M188 294.5H191M194 294.5H197M200 294.5H203M206 294.5H209M212 294.5H215M218 294.5H221M224 294.5H227M230 294.5H233M236 294.5H239M242 294.5H245M248 294.5H251M254 294.5H257M260 294.5H263M266 294.5H269M272 294.5H275M278 294.5H281M284 294.5H287M290 294.5H293M296 294.5H299M302 294.5H305M308 294.5H311M314 294.5H317M320 294.5H323M326 294.5H329M332 294.5H335M338 294.5H341M344 294.5H347M350 294.5H353M356 294.5H359M362 294.5H365M368 294.5H371M374 294.5H377M380 294.5H383M386 294.5H389M392 294.5H395M398 294.5H401M404 294.5H407M410 294.5H413M416 294.5H419M422 294.5H425M428 294.5H431M434 294.5H437M440 294.5H443M446 294.5H449M452 294.5H455M458 294.5H461M464 294.5H467M470 294.5H473M476 294.5H479M482 294.5H485M488 294.5H491M494 294.5H497M500 294.5H503M506 294.5H509M512 294.5H515M518 294.5H521M524 294.5H527M530 294.5H533M536 294.5H539M542 294.5H545M548 294.5H551M554 294.5H557M560 294.5H563M566 294.5H569M572 294.5H575M578 294.5H581M584 294.5H587M590 294.5H593M596 294.5H599M602 294.5H605M608 294.5H611M614 294.5H617M620 294.5H623M626 294.5H629M632 294.5H635M638 294.5H641M644 294.5H647M650 294.5H653M656 294.5H659M662 294.5H665M668 294.5H671M674 294.5H677" stroke="#c0c0c0"/>
<path d="M14 320.5H17M20 320.5H23M26 320.5H29M32 320.5H35M38 320.5H41M44 320.5H47M50 320.5H53M56 320.5H59M62 320.5H65M68 320.5H71M74 320.5H77M80 320.5H83M86 320.5H89M92 320.5H95M98 320.5H101M104 320.5H107M110 320.5H113M116 320.5H119M122 320.5H125M128 320.5H131M134 320.5H137M140 320.5H143M146 320.5H149M152 320.5H155M158 320.5H161M164 320.5H167M170 320.5H173M176 320.5H179M182 320.5H185M188 320.5H191M194 320.5H197M200 320.5H203M206 320.5H209M212 320.5H215M218 320.5H221M224 320.5H227M230 320.5H233M236 320.5H239M242 320.5H245M248 320.5H251M254 320.5H257M260 320.5H263M266 320.5H269M272 320.5H275M278 320.5H281M284 320.5H287M290 320.5H293M296 320.5H299M302 320.5H305M308 320.5H311M314 320.5H317M320 320.5H323M326 320.5H329M332 320.5H335M338 320.5H341M344 320.5H347M350 320.5H353M356 320.5H359M362 320.5H365M368 320.5H371M374 320.5H377M380 320.5H383M386 320.5H389M392 320.5H395M398 320.5H401M404 320.5H407M410 320.5H413M416 320.5H419M422 320.5H425M428 320.5H431M434 320.5H437M440 320.5H443M446 320.5H449M452 320.5H455M458 320.5H461M464 320.5H467M470 320.5H473M476 320.5H479M482 320.5H485M488 320.5H491M494 320.5H497M500 320.5H503M506 320.5H509M512 320.5H515M518 320.5H521M524 320.5H527M530 320.5H533M536 320.5H539M542 320.5H545M548 320.5H551M554 320.5H557M560 320.5H563M566 320.5H569M572 320.5H575M578 320.5H581M584 320.5H587M590 320.5H593M596 320.5H599M602 320.5H605M608 320.5H611M614 320.5H617M620 320.5H623M626 320.5H629M632 320.5H635M638 320.5H641M644 320.5H647M650 320.5H653M656 320.5H659M662 320.5H665M668 320.5H671M674 320.5H677" stroke="#c0c0c0"/>
<path d="M14 357.5H17M20 357.5H23M26 357.5H29M32 357.5H35M38 357.5H41M44 357.5H47M50 357.5H53M56 357.5H59M62 357.5H65M68 357.5H71M74 357.5H77M80 357.5H83M86 357.5H89M92 357.5H95M98 357.5H101M104 357.5H107M110 357.5H113M116 357.5H119M122 357.5H125M128 357.5H131M134 357.5H137M140 357.5H143M146 357.5H149M152 357.5H155M158 357.5H161M164 357.5H167M170 357.5H173M176 357.5H179M182 357.5H185M188 357.5H191M194 357.5H197M200 357.5H203M206 357.5H209M212 357.5H215M218 357.5H221M224 357.5H227M230 357.5H233M236 357.5H239M242 357.5H245M248 357.5H251M254 357.5H257M260 357.5H263M266 357.5H269M272 357.5H275M278 357.5H281M284 357.5H287M290 357.5H293M296 357.5H299M302 357.5H305M308 357.5H311M314 357.5H317M320 357.5H323M326 357.5H329M332 357.5H335M338 357.5H341M344 357.5H347M350 357.5H353M356 357.5H359M362 357.5H365M368 357.5H371M374 357.5H377M380 357.5H383M386 357.5H389M392 357.5H395M398 357.5H401M404 357.5H407M410 357.5H413M416 357.5H419M422 357.5H425M428 357.5H431M434 357.5H437M440 357.5H443M446 357.5H449M452 357.5H455M458 357.5H461M464 357.5H467M470 357.5H473M476 357.5H479M482 357.5H485M488 357.5H491M494 357.5H497M500 357.5H503M506 357.5H509M512 357.5H515M518 357.5H521M524 357.5H527M530 357.5H533M536 357.5H539M542 357.5H545M548 357.5H551M554 357.5H557M560 357.5H563M566 357.5H569M572 357.5H575M578 357.5H581M584 357.5H587M590 357.5H593M596 357.5H599M602 357.5H605M608 357.5H611M614 357.5H617M620 357.5H623M626 357.5H629M632 357.5H635M638 357.5H641M644 357.5H647M650 357.5H653M656 357.5H659M662 357.5H665M668 357.5H671M674 357.5H677" stroke="#c0c0c0"/>
<path d="M14 395.5H17M20 395.5H23M26 395.5H29M32 395.5H35M38 395.5H41M44 395.5H47M50 395.5H53M56 395.5H59M62 395.5H65M68 395.5H71M74 395.5H77M80 395.5H83M86 395.5H89M92 395.5H95M98 395.5H101M104 395.5H107M110 395.5H113M116 395.5H119M122 395.5H125M128 395.5H131M134 395.5H137M140 395.5H143M146 395.5H149M152 395.5H155M158 395.5H161M164 395.5H167M170 395.5H173M176 395.5H179M182 395.5H185M188 395.5H191M194 395.5H197M200 395.5H203M206 395.5H209M212 395.5H215M218 395.5H221M224 395.5H227M230 395.5H233M236 395.5H239M242 395.5H245M248 395.5H251M254 395.5H257M260 395.5H263M266 395.5H269M272 395.5H275M278 395.5H281M284 395.5H287M290 395.5H293M296 395.5H299M302 395.5H305M308 395.5H311M314 395.5H317M320 395.5H323M326 395.5H329M332 395.5H335M338 395.5H341M344 395.5H347M350 395.5H353M356 395.5H359M362 395.5H365M368 395.5H371M374 395.5H377M380 395.5H383M386 395.5H389M392 395.5H395M398 395.5H401M404 395.5H407M410 395.5H413M416 395.5H419M422 395.5H425M428 395.5H431M434 395.5H437M440 395.5H443M446 395.5H449M452 395.5H455M458 395.5H461M464 395.5H467M470 395.5H473M476 395.5H479M482 395.5H485M488 395.5H491M494 395.5H497M500 395.5H503M506 395.5H509M512 395.5H515M518 395.5H521M524 395.5H527M530 395.5H533M536 395.5H539M542 395.5H545M548 395.5H551M554 395.5H557M560 395.5H563M566 395.5H569M572 395.5H575M578 395.5H581M584 395.5H587M590 395.5H593M596 395.5H599M602 395.5H605M608 395.5H611M614 395.5H617M620 395.5H623M626 395.5H629M632 395.5H635M638 395.5H641M644 395.5H647M650 395.5H653M656 395.5H659M662 395.5H665M668 395.5H671M674 395.5H677" stroke="#c0c0c0"/>
<path d="M14 436.5H17M20 436.5H23M26 436.5H29M32 436.5H35M38 436.5H41M44 436.5H47M50 436.5H53M56 436.5H59M62 436.5H65M68 436.5H71M74 436.5H77M80 436.5H83M86 436.5H89M92 436.5H95M98 436.5H101M104 436.5H107M110 436.5H113M116 436.5H119M122 436.5H125M128 436.5H131M134 436.5H137M140 436.5H143M146 436.5H149M152 436.5H155M158 436.5H161M164 436.5H167M170 436.5H173M176 436.5H179M182 436.5H185M188 436.5H191M194 436.5H197M200 436.5H203M206 436.5H209M212 436.5H215M218 436.5H221M224 436.5H227M230 436.5H233M236 436.5H239M242 436.5H245M248 436.5H251M254 436.5H257M260 436.5H263M266 436.5H269M272 436.5H275M278 436.5H281M284 436.5H287M290 436.5H293M296 436.5H299M302 436.5H305M308 436.5H311M314 436.5H317M320 436.5H323M326 436.5H329M332 436.5H335M338 436.5H341M344 436.5H347M350 436.5H353M356 436.5H359M362 436.5H365M368 436.5H371M374 436.5H377M380 436.5H383M386 436.5H389M392 436.5H395M398 436.5H401M404 436.5H407M410 436.5H413M416 436.5H419M422 436.5H425M428 436.5H431M434 436.5H437M440 436.5H443M446 436.5H449M452 436.5H455M458 436.5H461M464 436.5H467M470 436.5H473M476 436.5H479M482 436.5H485M488 436.5H491M494 436.5H497M500 436.5H503M506 436.5H509M512 436.5H515M518 436.5H521M524 436.5H527M530 436.5H533M536 436.5H539M542 436.5H545M548 436.5H551M554 436.5H557M560 436.5H563M566 436.5H569M572 436.5H575M578 436.5H581M584 436.5H587M590 436.5H593M596 436.5H599M602 436.5H605M608 436.5H611M614 436.5H617M620 436.5H623M626 436.5H629M632 436.5H635M638 436.5H641M644 436.5H647M650 436.5H653M656 436.5H659M662 436.5H665M668 436.5H671M674 436.5H677" stroke="#c0c0c0"/>
<path d="M14 447.5H17M20 447.5H23M26 447.5H29M32 447.5H35M38 447.5H41M44 447.5H47M50 447.5H53M56 447.5H59M62 447.5H65M68 447.5H71M74 447.5H77M80 447.5H83M86 447.5H89M92 447.5H95M98 447.5H101M104 447.5H107M110 447.5H113M116 447.5H119M122 447.5H125M128 447.5H131M134 447.5H137M140 447.5H143M146 447.5H149M152 447.5H155M158 447.5H161M164 447.5H167M170 447.5H173M176 447.5H179M182 447.5H185M188 447.5H191M194 447.5H197M200 447.5H203M206 447.5H209M212 447.5H215M218 447.5H221M224 447.5H227M230 447.5H233M236 447.5H239M242 447.5H245M248 447.5H251M254 447.5H257M260 447.5H263M266 447.5H269M272 447.5H275M278 447.5H281M284 447.5H287M290 447.5H293M296 447.5H299M302 447.5H305M308 447.5H311M314 447.5H317M320 447.5H323M326 447.5H329M332 447.5H335M338 447.5H341M344 447.5H347M350 447.5H353M356 447.5H359M362 447.5H365M368 447.5H371M374 447.5H377M380 447.5H383M386 447.5H389M392 447.5H395M398 447.5H401M404 447.5H407M410 447.5H413M416 447.5H419M422 447.5H425M428 447.5H431M434 447.5H437M440 447.5H443M446 447.5H449M452 447.5H455M458 447.5H461M464 447.5H467M470 447.5H473M476 447.5H479M482 447.5H485M488 447.5H491M494 447.5H497M500 447.5H503M506 447.5H509M512 447.5H515M518 447.5H521M524 447.5H527M530 447.5H533M536 447.5H539M542 447.5H545M548 447.5H551M554 447.5H557M560 447.5H563M566 447.5H569M572 447.5H575M578 447.5H581M584 447.5H587M590 447.5H593M596 447.5H599M602 447.5H605M608 447.5H611M614 447.5H617M620 447.5H623M626 447.5H629M632 447.5H635M638 447.5H641M644 447.5H647M650 447.5H653M656 447.5H659M662 447.5H665M668 447.5H671M674 447.5H677" stroke="#c0c0c0"/>
<path d="M14 465.5H17M20 465.5H23M26 465.5H29M32 465.5H35M38 465.5H41M44 465.5H47M50 465.5H53M56 465.5H59M62 465.5H65M68 465.5H71M74 465.5H77M80 465.5H83M86 465.5H89M92 465.5H95M98 465.5H101M104 465.5H107M110 465.5H113M116 465.5H119M122 465.5H125M128 465.5H131M134 465.5H137M140 465.5H143M146 465.5H149M152 465.5H155M158 465.5H161M164 465.5H167M170 465.5H173M176 465.5H179M182 465.5H185M188 465.5H191M194 465.5H197M200 465.5H203M206 465.5H209M212 465.5H215M218 465.5H221M224 465.5H227M230 465.5H233M236 465.5H239M242 465.5H245M248 465.5H251M254 465.5H257M260 465.5H263M266 465.5H269M272 465.5H275M278 465.5H281M284 465.5H287M290 465.5H293M296 465.5H299M302 465.5H305M308 465.5H311M314 465.5H317M320 465.5H323M326 465.5H329M332 465.5H335M338 465.5H341M344 465.5H347M350 465.5H353M356 465.5H359M362 465.5H365M368 465.5H371M374 465.5H377M380 465.5H383M386 465.5H389M392 465.5H395M398 465.5H401M404 465.5H407M410 465.5H413M416 465.5H419M422 465.5H425M428 465.5H431M434 465.5H437M440 465.5H443M446 465.5H449M452 465.5H455M458 465.5H461M464 465.5H467M470 465.5H473M476 465.5H479M482 465.5H485M488 465.5H491M494 465.5H497M500 465.5H503M506 465.5H509M512 465.5H515M518 465.5H521M524 465.5H527M530 465.5H533M536 465.5H539M542 465.5H545M548 465.5H551M554 465.5H557M560 465.5H563M566 465.5H569M572 465.5H575M578 465.5H581M584 465.5H587M590 465.5H593M596 465.5H599M602 465.5H605M608 465.5H611M614 465.5H617M620 465.5H623M626 465.5H629M632 465.5H635M638 465.5H641M644 465.5H647M650 465.5H653M656 465.5H659M662 465.5H665M668 465.5H671M674 465.5H677" stroke="#c0c0c0"/>
<path d="M14 522.5H17M20 522.5H23M26 522.5H29M32 522.5H35M38 522.5H41M44 522.5H47M50 522.5H53M56 522.5H59M62 522.5H65M68 522.5H71M74 522.5H77M80 522.5H83M86 522.5H89M92 522.5H95M98 522.5H101M104 522.5H107M110 522.5H113M116 522.5H119M122 522.5H125M128 522.5H131M134 522.5H137M140 522.5H143M146 522.5H149M152 522.5H155M158 522.5H161M164 522.5H167M170 522.5H173M176 522.5H179M182 522.5H185M188 522.5H191M194 522.5H197M200 522.5H203M206 522.5H209M212 522.5H215M218 522.5H221M224 522.5H227M230 522.5H233M236 522.5H239M242 522.5H245M248 522.5H251M254 522.5H257M260 522.5H263M266 522.5H269M272 522.5H275M278 522.5H281M284 522.5H287M290 522.5H293M296 522.5H299M302 522.5H305M308 522.5H311M314 522.5H317M320 522.5H323M326 522.5H329M332 522.5H335M338 522.5H341M344 522.5H347M350 522.5H353M356 522.5H359M362 522.5H365M368 522.5H371M374 522.5H377M380 522.5H383M386 522.5H389M392 522.5H395M398 522.5H401M404 522.5H407M410 522.5H413M416 522.5H419M422 522.5H425M428 522.5H431M434 522.5H437M440 522.5H443M446 522.5H449M452 522.5H455M458 522.5H461M464 522.5H467M470 522.5H473M476 522.5H479M482 522.5H485M488 522.5H491M494 522.5H497M500 522.5H503M506 522.5H509M512 522.5H515M518 522.5H521M524 522.5H527M530 522.5H533M536 522.5H539M542 522.5H545M548 522.5H551M554 522.5H557M560 522.5H563M566 522.5H569M572 522.5H575M578 522.5H581M584 522.5H587M590 522.5H593M596 522.5H599M602 522.5H605M608 522.5H611M614 522.5H617M620 522.5H623M626 522.5H629M632 522.5H635M638 522.5H641M644 522.5H647M650 522.5H653M656 522.5H659M662 522.5H665M668 522.5H671M674 522.5H677" stroke="#c0c0c0"/>
<path d="M14 539.5H17M20 539.5H23M26 539.5H29M32 539.5H35M38 539.5H41M44 539.5H47M50 539.5H53M56 539.5H59M62 539.5H65M68 539.5H71M74 539.5H77M80 539.5H83M86 539.5H89M92 539.5H95M98 539.5H101M104 539.5H107M110 539.5H113M116 539.5H119M122 539.5H125M128 539.5H131M134 539.5H137M140 539.5H143M146 539.5H149M152 539.5H155M158 539.5H161M164 539.5H167M170 539.5H173M176 539.5H179M182 539.5H185M188 539.5H191M194 539.5H197M200 539.5H203M206 539.5H209M212 539.5H215M218 539.5H221M224 539.5H227M230 539.5H233M236 539.5H239M242 539.5H245M248 539.5H251M254 539.5H257M260 539.5H263M266 539.5H269M272 539.5H275M278 539.5H281M284 539.5H287M290 539.5H293M296 539.5H299M302 539.5H305M308 539.5H311M314 539.5H317M320 539.5H323M326 539.5H329M332 539.5H335M338 539.5H341M344 539.5H347M350 539.5H353M356 539.5H359M362 539.5H365M368 539.5H371M374 539.5H377M380 539.5H383M386 539.5H389M392 539.5H395M398 539.5H401M404 539.5H407M410 539.5H413M416 539.5H419M422 539.5H425M428 539.5H431M434 539.5H437M440 539.5H443M446 539.5H449M452 539.5H455M458 539.5H461M464 539.5H467M470 539.5H473M476 539.5H479M482 539.5H485M488 539.5H491M494 539.5H497M500 539.5H503M506 539.5H509M512 539.5H515M518 539.5H521M524 539.5H527M530 539.5H533M536 539.5H539M542 539.5H545M548 539.5H551M554 539.5H557M560 539.5H563M566 539.5H569M572 539.5H575M578 539.5H581M584 539.5H587M590 539.5H593M596 539.5H599M602 539.5H605M608 539.5H611M614 539.5H617M620 539.5H623M626 539.5H629M632 539.5H635M638 539.5H641M644 539.5H647M650 539.5H653M656 539.5H659M662 539.5H665M668 539.5H671M674 539.5H677" stroke="#c0c0c0"/>
<path d="M14 493.5H17M20 493.5H23M26 493.5H29M32 493.5H35M38 493.5H41M44 493.5H47M50 493.5H53M56 493.5H59M62 493.5H65M68 493.5H71M74 493.5H77M80 493.5H83M86 493.5H89M92 493.5H95M98 493.5H101M104 493.5H107M110 493.5H113M116 493.5H119M122 493.5H125M128 493.5H131M134 493.5H137M140 493.5H143M146 493.5H149M152 493.5H155M158 493.5H161M164 493.5H167M170 493.5H173M176 493.5H179M182 493.5H185M188 493.5H191M194 493.5H197M200 493.5H203M206 493.5H209M212 493.5H215M218 493.5H221M224 493.5H227M230 493.5H233M236 493.5H239M242 493.5H245M248 493.5H251M254 493.5H257M260 493.5H263M266 493.5H269M272 493.5H275M278 493.5H281M284 493.5H287M290 493.5H293M296 493.5H299M302 493.5H305M308 493.5H311M314 493.5H317M320 493.5H323M326 493.5H329M332 493.5H335M338 493.5H341M344 493.5H347M350 493.5H353M356 493.5H359M362 493.5H365M368 493.5H371M374 493.5H377M380 493.5H383M386 493.5H389M392 493.5H395M398 493.5H401M404 493.5H407M410 493.5H413M416 493.5H419M422 493.5H425M428 493.5H431M434 493.5H437M440 493.5H443M446 493.5H449M452 493.5H455M458 493.5H461M464 493.5H467M470 493.5H473M476 493.5H479M482 493.5H485M488 493.5H491M494 493.5H497M500 493.5H503M506 493.5H509M512 493.5H515M518 493.5H521M524 493.5H527M530 493.5H533M536 493.5H539M542 493.5H545M548 493.5H551M554 493.5H557M560 493.5H563M566 493.5H569M572 493.5H575M578 493.5H581M584 493.5H587M590 493.5H593M596 493.5H599M602 493.5H605M608 493.5H611M614 493.5H617M620 493.5H623M626 493.5H629M632 493.5H635M638 493.5H641M644 493.5H647M650 493.5H653M656 493.5H659M662 493.5H665M668 493.5H671M674 493.5H677" stroke="#778899"/>
</g>
<g shape-rendering="crispEdges" clip-path="url(#main)">
<rect x="13" y="161" width="1" height="13" fill="#00ff00"/>
<rect x="11" y="165" width="5" height="6" fill="#00ff00"/>
<rect x="12" y="166" width="3" height="4" fill="#fff"/>
<rect x="21" y="165" width="1" height="8" fill="#00ff00"/>
<rect x="19" y="171" width="5" height="2" fill="#00ff00"/>
<rect x="29" y="155" width="1" height="19" fill="#00ff00"/>
<rect x="27" y="159" width="5" height="15" fill="#00ff00"/>
<rect x="28" y="160" width="3" height="13" fill="#000"/>
<rect x="37" y="152" width="1" height="21" fill="#00ff00"/>
<rect x="35" y="160" width="5" height="11" fill="#00ff00"/>
<rect x="36" y="161" width="3" height="9" fill="#fff"/>
<rect x="45" y="158" width="1" height="39" fill="#00ff00"/>
<rect x="43" y="169" width="5" height="26" fill="#00ff00"/>
<rect x="44" y="170" width="3" height="24" fill="#fff"/>
<rect x="53" y="189" width="1" height="47" fill="#00ff00"/>
<rect x="51" y="195" width="5" height="2" fill="#00ff00"/>
<rect x="61" y="190" width="1" height="39" fill="#00ff00"/>
<rect x="59" y="196" width="5" height="26" fill="#00ff00"/>
<rect x="60" y="197" width="3" height="24" fill="#fff"/>
<rect x="69" y="209" width="1" height="24" fill="#00ff00"/>
<rect x="67" y="221" width="5" height="7" fill="#00ff00"/>
<rect x="68" y="222" width="3" height="5" fill="#fff"/>
<rect x="77" y="222" width="1" height="19" fill="#00ff00"/>
<rect x="75" y="227" width="5" height="11" fill="#00ff00"/>
<rect x="76" y="228" width="3" height="9" fill="#fff"/>
<rect x="85" y="223" width="1" height="61" fill="#00ff00"/>
<rect x="83" y="236" width="5" height="25" fill="#00ff00"/>
<rect x="84" y="237" width="3" height="23" fill="#fff"/>
<rect x="93" y="244" width="1" height="26" fill="#00ff00"/>
<rect x="91" y="249" width="5" height="11" fill="#00ff00"/>
<rect x="92" y="250" width="3" height="9" fill="#000"/>
<rect x="101" y="232" width="1" height="28" fill="#00ff00"/>
<rect x="99" y="249" width="5" height="2" fill="#00ff00"/>
<rect x="109" y="240" width="1" height="26" fill="#00ff00"/>
<rect x="107" y="246" width="5" height="4" fill="#00ff00"/>
<rect x="108" y="247" width="3" height="2" fill="#000"/>
<rect x="117" y="238" width="1" height="20" fill="#00ff00"/>
<rect x="115" y="246" width="5" height="8" fill="#00ff00"/>
<rect x="116" y="247" width="3" height="6" fill="#fff"/>
<rect x="125" y="234" width="1" height="24" fill="#00ff00"/>
<rect x="123" y="236" width="5" height="18" fill="#00ff00"/>
<rect x="124" y="237" width="3" height="16" fill="#000"/>
<rect x="133" y="220" width="1" height="21" fill="#00ff00"/>
<rect x="131" y="220" width="5" height="17" fill="#00ff00"/>
<rect x="132" y="221" width="3" height="15" fill="#000"/>
<rect x="141" y="209" width="1" height="17" fill="#00ff00"/>
<rect x="139" y="209" width="5" height="13" fill="#00ff00"/>
<rect x="140" y="210" width="3" height="11" fill="#000"/>
<rect x="149" y="197" width="1" height="17" fill="#00ff00"/>
<rect x="147" y="209" width="5" height="4" fill="#00ff00"/>
<rect x="148" y="210" width="3" height="2" fill="#fff"/>
<rect x="157" y="205" width="1" height="8" fill="#00ff00"/>
<rect x="155" y="209" width="5" height="3" fill="#00ff00"/>
<rect x="156" y="210" width="3" height="1" fill="#000"/>
<rect x="165" y="198" width="1" height="12" fill="#00ff00"/>
<rect x="163" y="201" width="5" height="8" fill="#00ff00"/>
<rect x="164" y="202" width="3" height="6" fill="#000"/>
<rect x="173" y="190" width="1" height="12" fill="#00ff00"/>
<rect x="171" y="197" width="5" height="5" fill="#00ff00"/>
<rect x="172" y="198" width="3" height="3" fill="#000"/>
<rect x="181" y="183" width="1" height="17" fill="#00ff00"/>
<rect x="179" y="188" width="5" height="10" fill="#00ff00"/>
<rect x="180" y="189" width="3" height="8" fill="#000"/>
<rect x="189" y="165" width="1" height="24" fill="#00ff00"/>
<rect x="187" y="165" width="5" height="24" fill="#00ff00"/>
<rect x="188" y="166" width="3" height="22" fill="#000"/>
<rect x="197" y="160" width="1" height="11" fill="#00ff00"/>
<rect x="195" y="164" width="5" height="3" fill="#00ff00"/>
<rect x="196" y="165" width="3" height="1" fill="#000"/>
<rect x="205" y="163" width="1" height="5" fill="#00ff00"/>
<rect x="203" y="164" width="5" height="3" fill="#00ff00"/>
<rect x="204" y="165" width="3" height="1" fill="#fff"/>
<rect x="213" y="157" width="1" height="14" fill="#00ff00"/>
<rect x="211" y="160" width="5" height="7" fill="#00ff00"/>
<rect x="212" y="161" width="3" height="5" fill="#000"/>
<rect x="221" y="157" width="1" height="16" fill="#00ff00"/>
<rect x="219" y="160" width="5" height="10" fill="#00ff00"/>
<rect x="220" y="161" width="3" height="8" fill="#fff"/>
<rect x="229" y="160" width="1" height="20" fill="#00ff00"/>
<rect x="227" y="169" width="5" height="6" fill="#00ff00"/>
<rect x="228" y="170" width="3" height="4" fill="#fff"/>
<rect x="237" y="159" width="1" height="30" fill="#00ff00"/>
<rect x="235" y="174" width="5" height="6" fill="#00ff00"/>
<rect x="236" y="175" width="3" height="4" fill="#fff"/>
<rect x="245" y="172" width="1" height="12" fill="#00ff00"/>
<rect x="243" y="177" width="5" height="3" fill="#00ff00"/>
<rect x="244" y="178" width="3" height="1" fill="#000"/>
<rect x="253" y="148" width="1" height="52" fill="#00ff00"/>
<rect x="251" y="163" width="5" height="15" fill="#00ff00"/>
<rect x="252" y="164" width="3" height="13" fill="#000"/>
<rect x="261" y="159" width="1" height="49" fill="#00ff00"/>
<rect x="259" y="163" width="5" height="30" fill="#00ff00"/>
<rect x="260" y="164" width="3" height="28" fill="#fff"/>
<rect x="269" y="144" width="1" height="67" fill="#00ff00"/>
<rect x="267" y="165" width="5" height="28" fill="#00ff00"/>
<rect x="268" y="166" width="3" height="26" fill="#000"/>
<rect x="277" y="116" width="1" height="56" fill="#00ff00"/>
<rect x="275" y="119" width="5" height="47" fill="#00ff00"/>
<rect x="276" y="120" width="3" height="45" fill="#000"/>
<rect x="285" y="117" width="1" height="32" fill="#00ff00"/>
<rect x="283" y="118" width="5" height="25" fill="#00ff00"/>
<rect x="284" y="119" width="3" height="23" fill="#fff"/>
<rect x="293" y="85" width="1" height="59" fill="#00ff00"/>
<rect x="291" y="88" width="5" height="54" fill="#00ff00"/>
<rect x="292" y="89" width="3" height="52" fill="#000"/>
<rect x="301" y="76" width="1" height="27" fill="#00ff00"/>
<rect x="299" y="88" width="5" height="9" fill="#00ff00"/>
<rect x="300" y="89" width="3" height="7" fill="#fff"/>
<rect x="309" y="56" width="1" height="41" fill="#00ff00"/>
<rect x="307" y="58" width="5" height="39" fill="#00ff00"/>
<rect x="308" y="59" width="3" height="37" fill="#000"/>
<rect x="317" y="56" width="1" height="11" fill="#00ff00"/>
<rect x="315" y="58" width="5" height="7" fill="#00ff00"/>
<rect x="316" y="59" width="3" height="5" fill="#fff"/>
<rect x="325" y="54" width="1" height="12" fill="#00ff00"/>
<rect x="323" y="57" width="5" height="8" fill="#00ff00"/>
<rect x="324" y="58" width="3" height="6" fill="#000"/>
<rect x="333" y="47" width="1" height="15" fill="#00ff00"/>
<rect x="331" y="57" width="5" height="2" fill="#00ff00"/>
<rect x="341" y="56" width="1" height="17" fill="#00ff00"/>
<rect x="339" y="58" width="5" height="15" fill="#00ff00"/>
<rect x="340" y="59" width="3" height="13" fill="#fff"/>
<rect x="349" y="66" width="1" height="13" fill="#00ff00"/>
<rect x="347" y="72" width="5" height="2" fill="#00ff00"/>
<rect x="357" y="65" width="1" height="11" fill="#00ff00"/>
<rect x="355" y="68" width="5" height="6" fill="#00ff00"/>
<rect x="356" y="69" width="3" height="4" fill="#000"/>
<rect x="365" y="66" width="1" height="16" fill="#00ff00"/>
<rect x="363" y="68" width="5" height="8" fill="#00ff00"/>
<rect x="364" y="69" width="3" height="6" fill="#fff"/>
<rect x="373" y="75" width="1" height="13" fill="#00ff00"/>
<rect x="371" y="75" width="5" height="11" fill="#00ff00"/>
<rect x="372" y="76" width="3" height="9" fill="#fff"/>
<rect x="381" y="81" width="1" height="8" fill="#00ff00"/>
<rect x="379" y="84" width="5" height="3" fill="#00ff00"/>
<rect x="380" y="85" width="3" height="1" fill="#fff"/>
<rect x="389" y="84" width="1" height="11" fill="#00ff00"/>
<rect x="387" y="84" width="5" height="3" fill="#00ff00"/>
<rect x="388" y="85" width="3" height="1" fill="#000"/>
<rect x="397" y="80" width="1" height="10" fill="#00ff00"/>
<rect x="395" y="82" width="5" height="3" fill="#00ff00"/>
<rect x="396" y="83" width="3" height="1" fill="#000"/>
<rect x="405" y="82" width="1" height="18" fill="#00ff00"/>
<rect x="403" y="82" width="5" height="18" fill="#00ff00"/>
<rect x="404" y="83" width="3" height="16" fill="#fff"/>
<rect x="413" y="85" width="1" height="15" fill="#00ff00"/>
<rect x="411" y="97" width="5" height="3" fill="#00ff00"/>
<rect x="412" y="98" width="3" height="1" fill="#000"/>
<rect x="421" y="91" width="1" height="27" fill="#00ff00"/>
<rect x="419" y="96" width="5" height="16" fill="#00ff00"/>
<rect x="420" y="97" width="3" height="14" fill="#fff"/>
<rect x="429" y="98" width="1" height="20" fill="#00ff00"/>
<rect x="427" y="107" width="5" height="4" fill="#00ff00"/>
<rect x="428" y="108" width="3" height="2" fill="#000"/>
<rect x="437" y="104" width="1" height="17" fill="#00ff00"/>
<rect x="435" y="107" width="5" height="7" fill="#00ff00"/>
<rect x="436" y="108" width="3" height="5" fill="#fff"/>
<rect x="445" y="105" width="1" height="25" fill="#00ff00"/>
<rect x="443" y="113" width="5" height="11" fill="#00ff00"/>
<rect x="444" y="114" width="3" height="9" fill="#fff"/>
<rect x="453" y="106" width="1" height="20" fill="#00ff00"/>
<rect x="451" y="117" width="5" height="7" fill="#00ff00"/>
<rect x="452" y="118" width="3" height="5" fill="#000"/>
<rect x="461" y="117" width="1" height="20" fill="#00ff00"/>
<rect x="459" y="118" width="5" height="13" fill="#00ff00"/>
<rect x="460" y="119" width="3" height="11" fill="#fff"/>
<rect x="469" y="110" width="1" height="23" fill="#00ff00"/>
<rect x="467" y="118" width="5" height="14" fill="#00ff00"/>
<rect x="468" y="119" width="3" height="12" fill="#000"/>
<rect x="477" y="113" width="1" height="36" fill="#00ff00"/>
<rect x="475" y="118" width="5" height="27" fill="#00ff00"/>
<rect x="476" y="119" width="3" height="25" fill="#fff"/>
<rect x="485" y="140" width="1" height="49" fill="#00ff00"/>
<rect x="483" y="144" width="5" height="35" fill="#00ff00"/>
<rect x="484" y="145" width="3" height="33" fill="#fff"/>
<rect x="493" y="161" width="1" height="28" fill="#00ff00"/>
<rect x="491" y="175" width="5" height="5" fill="#00ff00"/>
<rect x="492" y="176" width="3" height="3" fill="#000"/>
<rect x="501" y="159" width="1" height="20" fill="#00ff00"/>
<rect x="499" y="167" width="5" height="10" fill="#00ff00"/>
<rect x="500" y="168" width="3" height="8" fill="#000"/>
<rect x="509" y="159" width="1" height="24" fill="#00ff00"/>
<rect x="507" y="161" width="5" height="7" fill="#00ff00"/>
<rect x="508" y="162" width="3" height="5" fill="#000"/>
<rect x="517" y="159" width="1" height="14" fill="#00ff00"/>
<rect x="515" y="161" width="5" height="12" fill="#00ff00"/>
<rect x="516" y="162" width="3" height="10" fill="#fff"/>
<rect x="525" y="156" width="1" height="17" fill="#00ff00"/>
<rect x="523" y="159" width="5" height="14" fill="#00ff00"/>
<rect x="524" y="160" width="3" height="12" fill="#000"/>
<rect x="533" y="159" width="1" height="11" fill="#00ff00"/>
<rect x="531" y="159" width="5" height="4" fill="#00ff00"/>
<rect x="532" y="160" width="3" height="2" fill="#fff"/>
<rect x="541" y="160" width="1" height="10" fill="#00ff00"/>
<rect x="539" y="162" width="5" height="2" fill="#00ff00"/>
<rect x="549" y="154" width="1" height="10" fill="#00ff00"/>
<rect x="547" y="161" width="5" height="3" fill="#00ff00"/>
<rect x="548" y="162" width="3" height="1" fill="#000"/>
<rect x="557" y="156" width="1" height="16" fill="#00ff00"/>
<rect x="555" y="162" width="5" height="9" fill="#00ff00"/>
<rect x="556" y="163" width="3" height="7" fill="#fff"/>
<rect x="565" y="154" width="1" height="20" fill="#00ff00"/>
<rect x="563" y="154" width="5" height="16" fill="#00ff00"/>
<rect x="564" y="155" width="3" height="14" fill="#000"/>
<rect x="573" y="146" width="1" height="13" fill="#00ff00"/>
<rect x="571" y="146" width="5" height="10" fill="#00ff00"/>
<rect x="572" y="147" width="3" height="8" fill="#000"/>
<rect x="581" y="145" width="1" height="9" fill="#00ff00"/>
<rect x="579" y="146" width="5" height="7" fill="#00ff00"/>
<rect x="580" y="147" width="3" height="5" fill="#fff"/>
<rect x="589" y="150" width="1" height="8" fill="#00ff00"/>
<rect x="587" y="150" width="5" height="3" fill="#00ff00"/>
<rect x="588" y="151" width="3" height="1" fill="#000"/>
<rect x="597" y="143" width="1" height="17" fill="#00ff00"/>
<rect x="595" y="150" width="5" height="9" fill="#00ff00"/>
<rect x="596" y="151" width="3" height="7" fill="#fff"/>
<rect x="605" y="147" width="1" height="12" fill="#00ff00"/>
<rect x="603" y="153" width="5" height="6" fill="#00ff00"/>
<rect x="604" y="154" width="3" height="4" fill="#000"/>
<rect x="613" y="152" width="1" height="22" fill="#00ff00"/>
<rect x="611" y="152" width="5" height="9" fill="#00ff00"/>
<rect x="612" y="153" width="3" height="7" fill="#fff"/>
<rect x="621" y="154" width="1" height="24" fill="#00ff00"/>
<rect x="619" y="160" width="5" height="16" fill="#00ff00"/>
<rect x="620" y="161" width="3" height="14" fill="#fff"/>
<rect x="629" y="170" width="1" height="16" fill="#00ff00"/>
<rect x="627" y="175" width="5" height="7" fill="#00ff00"/>
<rect x="628" y="176" width="3" height="5" fill="#fff"/>
<rect x="637" y="180" width="1" height="35" fill="#00ff00"/>
<rect x="635" y="181" width="5" height="27" fill="#00ff00"/>
<rect x="636" y="182" width="3" height="25" fill="#fff"/>
<rect x="645" y="196" width="1" height="15" fill="#00ff00"/>
<rect x="643" y="207" width="5" height="2" fill="#00ff00"/>
<rect x="653" y="187" width="1" height="23" fill="#00ff00"/>
<rect x="651" y="187" width="5" height="23" fill="#00ff00"/>
<rect x="652" y="188" width="3" height="21" fill="#000"/>
<rect x="661" y="131" width="1" height="81" fill="#00ff00"/>
<rect x="659" y="160" width="5" height="28" fill="#00ff00"/>
<rect x="660" y="161" width="3" height="26" fill="#000"/>
<rect x="669" y="145" width="1" height="60" fill="#00ff00"/>
<rect x="667" y="161" width="5" height="15" fill="#00ff00"/>
<rect x="668" y="162" width="3" height="13" fill="#fff"/>
<rect x="677" y="136" width="1" height="44" fill="#00ff00"/>
<rect x="675" y="145" width="5" height="31" fill="#00ff00"/>
<rect x="676" y="146" width="3" height="29" fill="#000"/>
</g>
<polygon points="45.00,141.20 46.65,146.14 51.75,145.10 48.30,149.00 51.75,152.90 46.65,151.86 45.00,156.80 43.35,151.86 38.25,152.90 41.70,149.00 38.25,145.10 43.35,146.14" fill="#dcdcdc"/>
<polygon points="268.80,212.00 270.45,216.94 275.55,215.90 272.10,219.80 275.55,223.70 270.45,222.66 268.80,227.60 267.15,222.66 262.05,223.70 265.50,219.80 262.05,215.90 267.15,216.94" fill="#ee82ee"/>
<path d="M53.3 157V176" stroke="#dcdcdc" stroke-width="3.2" fill="none"/>
<polygon points="43.6,166 53.3,174 63,166 63,170 53.3,178 43.6,170" fill="#dcdcdc"/>
<path d="M277.2 200V181" stroke="#ee82ee" stroke-width="3.4" fill="none"/>
<polygon points="267.3,190.8 277.2,182.3 287.1,190.8 287.1,186.8 277.2,178.3 267.3,186.8" fill="#ee82ee"/>
<polyline points="13.5,318.50 21.5,325.00 29.5,308.50 37.5,339.00 45.5,415.00 53.5,362.50 61.5,400.00 69.5,408.00 77.5,416.00 85.5,398.00 93.5,388.00 101.5,387.00 109.5,386.00 117.5,391.00 125.5,373.00 133.5,358.00 141.5,349.00 149.5,348.50 157.5,320.50 165.5,310.50 173.5,305.00 181.5,302.00 189.5,296.50 197.5,299.00 205.5,300.50 213.5,299.00 221.5,311.00 229.5,318.00 237.5,330.00 245.5,331.00 253.5,324.50 261.5,382.00 269.5,335.00 277.5,299.00 285.5,329.00 293.5,299.00 301.5,313.00 309.5,297.00 317.5,301.00 325.5,298.00 333.5,305.00 341.5,314.50 349.5,314.50 357.5,312.00 365.5,317.00 373.5,323.00 381.5,332.50 389.5,340.50 397.5,340.50 405.5,414.50 413.5,415.50 421.5,409.50 429.5,402.50 437.5,409.00 445.5,410.00 453.5,398.50 461.5,411.00 469.5,389.00 477.5,413.50 485.5,408.50 493.5,405.50 501.5,398.00 509.5,389.00 517.5,400.50 525.5,382.50 533.5,384.00 541.5,383.00 549.5,381.00 557.5,392.00 565.5,367.00 573.5,352.50 581.5,359.00 589.5,322.00 597.5,335.00 605.5,325.50 613.5,349.00 621.5,414.00 629.5,409.00 637.5,409.00 645.5,411.00 653.5,370.50 661.5,340.50 669.5,361.50 677.5,317.50" fill="none" stroke="#00ffff" stroke-width="2.2" stroke-linejoin="round" clip-path="url(#s1)"/>
<polyline points="13.5,526.50 21.5,526.00 29.5,525.00 37.5,525.00 45.5,525.50 53.5,526.00 61.5,530.00 69.5,532.50 77.5,534.50 85.5,535.00 93.5,535.00 101.5,536.00 109.5,536.00 117.5,536.50 125.5,537.00 133.5,539.50 141.5,540.00 149.5,539.50 157.5,538.50 165.5,538.00 173.5,538.00 181.5,537.50 189.5,533.50 197.5,529.00 205.5,525.50 213.5,519.50 221.5,515.50 229.5,512.00 237.5,510.00 245.5,509.00 253.5,508.00 261.5,508.50 269.5,504.50 277.5,497.50 285.5,491.00 293.5,486.50 301.5,481.50 309.5,476.00 317.5,472.50 325.5,470.00 333.5,467.00 341.5,465.00 349.5,463.00 357.5,461.00 365.5,459.00 373.5,457.50 381.5,456.00 389.5,454.50 397.5,453.50 405.5,452.00 413.5,450.00 421.5,448.00 429.5,447.00 437.5,446.50 445.5,446.00 453.5,446.00 461.5,446.00 469.5,446.50 477.5,449.50 485.5,452.50 493.5,455.00 501.5,457.50 509.5,459.50 517.5,463.00 525.5,465.00 533.5,468.50 541.5,471.50 549.5,475.00 557.5,479.00 565.5,481.50 573.5,484.00 581.5,487.00 589.5,491.00 597.5,494.00 605.5,497.50 613.5,501.00 621.5,504.50 629.5,509.00 637.5,515.00 645.5,520.00 653.5,524.00 661.5,528.00 669.5,532.00 677.5,536.00" fill="none" stroke="#ffff00" stroke-width="2.2" stroke-linejoin="round" clip-path="url(#s2)"/>
<polyline points="13.5,505.00 21.5,500.00 29.5,495.00 37.5,495.00 45.5,505.50 53.5,517.00 61.5,517.00 69.5,517.00 77.5,517.50 85.5,518.50 93.5,519.00 101.5,519.50 109.5,520.00 117.5,526.00 125.5,530.00 133.5,532.50 141.5,533.00 149.5,533.00 157.5,532.00 165.5,530.00 173.5,527.00 181.5,522.00 189.5,513.00 197.5,503.50 205.5,493.00 213.5,484.00 221.5,477.00 229.5,471.50 237.5,461.00 245.5,452.00 253.5,447.00 261.5,445.00 269.5,444.00 277.5,443.00 285.5,442.00 293.5,441.75 301.5,441.75 309.5,441.75 317.5,441.75 325.5,441.75 333.5,442.00 341.5,443.00 349.5,444.00 357.5,445.00 365.5,445.50 373.5,447.00 381.5,448.50 389.5,450.50 397.5,451.50 405.5,453.50 413.5,457.50 421.5,462.50 429.5,467.50 437.5,475.00 445.5,482.00 453.5,490.00 461.5,500.00 469.5,509.00 477.5,522.50 485.5,533.00 493.5,543.50 501.5,546.50 509.5,548.50 517.5,548.50 525.5,548.50 533.5,548.00 541.5,547.00 549.5,546.50 557.5,545.50 565.5,543.50 573.5,540.50 581.5,538.00 589.5,534.50 597.5,531.50 605.5,527.00 613.5,522.50 621.5,521.50 629.5,521.00 637.5,521.00 645.5,521.00 653.5,520.50 661.5,514.00 669.5,512.00 677.5,501.00" fill="none" stroke="#00ffff" stroke-width="2.2" stroke-linejoin="round" clip-path="url(#s2)"/>
<g shape-rendering="crispEdges" fill="#fff">
<rect x="12" y="33" width="669" height="1"/>
<rect x="12" y="33" width="1" height="519"/>
<rect x="680" y="33" width="1" height="519"/>
<rect x="12" y="551" width="669" height="1"/>
<rect x="12" y="291" width="669" height="1"/>
<rect x="12" y="293" width="669" height="1"/>
<rect x="12" y="421" width="669" height="1"/>
<rect x="12" y="423" width="669" height="1"/>
<rect x="12" y="292" width="669" height="1" fill="#000"/>
<rect x="12" y="422" width="669" height="1" fill="#000"/>
<rect x="681" y="57" width="2" height="1"/>
<rect x="681" y="90" width="2" height="1"/>
<rect x="681" y="123" width="2" height="1"/>
<rect x="681" y="156" width="2" height="1"/>
<rect x="681" y="189" width="2" height="1"/>
<rect x="681" y="222" width="2" height="1"/>
<rect x="681" y="255" width="2" height="1"/>
<rect x="681" y="288" width="2" height="1"/>
<rect x="681" y="295" width="2" height="1"/>
<rect x="681" y="320" width="2" height="1"/>
<rect x="681" y="357" width="2" height="1"/>
<rect x="681" y="395" width="2" height="1"/>
<rect x="681" y="436" width="2" height="1"/>
<rect x="681" y="447" width="2" height="1"/>
<rect x="681" y="465" width="2" height="1"/>
<rect x="681" y="493" width="2" height="1"/>
<rect x="681" y="522" width="2" height="1"/>
<rect x="681" y="539" width="2" height="1"/>
<rect x="13" y="552" width="1" height="3"/>
<rect x="77" y="552" width="1" height="3"/>
<rect x="141" y="552" width="1" height="3"/>
<rect x="205" y="552" width="1" height="3"/>
<rect x="269" y="552" width="1" height="3"/>
<rect x="333" y="552" width="1" height="3"/>
<rect x="397" y="552" width="1" height="3"/>
<rect x="461" y="552" width="1" height="3"/>
<rect x="525" y="552" width="1" height="3"/>
<rect x="589" y="552" width="1" height="3"/>
<rect x="653" y="552" width="1" height="3"/>
</g>
<polygon points="13,545 13,551 19,551" fill="#778899"/>
<polygon points="16,40 23,40 19.5,44" fill="#fff"/>
<g font-family="Liberation Sans, Arial, sans-serif">
<rect x="30" y="11" width="61" height="13" rx="5" fill="#fff" opacity="0.32" filter="url(#glow)"/>
<text x="30.5" y="21.6" font-size="12" fill="#14141e" text-anchor="start" textLength="59.5" lengthAdjust="spacingAndGlyphs" >EURUSD,H1</text>
<text x="28.5" y="45" font-size="10" fill="#fff" text-anchor="start" textLength="53.2" lengthAdjust="spacingAndGlyphs" >EURUSD,H1</text>
<text x="87.7" y="45" font-size="10" fill="#fff" text-anchor="start" textLength="141.3" lengthAdjust="spacingAndGlyphs" >0.97381 0.97418 0.97346 0.97377</text>
<text x="17.4" y="306" font-size="10" fill="#fff" text-anchor="start" textLength="70.8" lengthAdjust="spacingAndGlyphs" >%R(14) -86.4686</text>
<text x="17.5" y="436" font-size="10" fill="#fff" text-anchor="start" textLength="107.5" lengthAdjust="spacingAndGlyphs" xml:space="preserve">R1(52) -88.4  R1(26) -63.6</text>
<text x="686.7" y="61" font-size="10" fill="#fff" text-anchor="start" textLength="32.3" lengthAdjust="spacingAndGlyphs" >1.13490</text>
<text x="686.7" y="94" font-size="10" fill="#fff" text-anchor="start" textLength="32.3" lengthAdjust="spacingAndGlyphs" >1.13310</text>
<text x="686.7" y="127" font-size="10" fill="#fff" text-anchor="start" textLength="32.3" lengthAdjust="spacingAndGlyphs" >1.13135</text>
<text x="686.7" y="160" font-size="10" fill="#fff" text-anchor="start" textLength="32.3" lengthAdjust="spacingAndGlyphs" >1.12955</text>
<text x="686.7" y="193" font-size="10" fill="#fff" text-anchor="start" textLength="32.3" lengthAdjust="spacingAndGlyphs" >1.12775</text>
<text x="686.7" y="226" font-size="10" fill="#fff" text-anchor="start" textLength="32.3" lengthAdjust="spacingAndGlyphs" >1.12600</text>
<text x="686.7" y="259" font-size="10" fill="#fff" text-anchor="start" textLength="32.3" lengthAdjust="spacingAndGlyphs" >1.12420</text>
<text x="686.7" y="292" font-size="10" fill="#fff" text-anchor="start" textLength="32.3" lengthAdjust="spacingAndGlyphs" >1.12245</text>
<text x="683.6" y="304" font-size="10" fill="#fff" text-anchor="start" textLength="5.1" lengthAdjust="spacingAndGlyphs" >0</text>
<text x="683" y="324" font-size="10" fill="#fff" text-anchor="start" textLength="13.2" lengthAdjust="spacingAndGlyphs" >-20</text>
<text x="683" y="361" font-size="10" fill="#fff" text-anchor="start" textLength="13.2" lengthAdjust="spacingAndGlyphs" >-50</text>
<text x="683" y="399" font-size="10" fill="#fff" text-anchor="start" textLength="13.2" lengthAdjust="spacingAndGlyphs" >-80</text>
<text x="684" y="418" font-size="10" fill="#fff" text-anchor="start" textLength="18.3" lengthAdjust="spacingAndGlyphs" >-100</text>
<text x="683.8" y="434" font-size="10" fill="#fff" text-anchor="start" textLength="15.3" lengthAdjust="spacingAndGlyphs" >120</text>
<text x="683" y="440" font-size="10" fill="#fff" text-anchor="start" textLength="15.3" lengthAdjust="spacingAndGlyphs" >100</text>
<text x="683" y="451" font-size="10" fill="#fff" text-anchor="start" textLength="10.2" lengthAdjust="spacingAndGlyphs" >80</text>
<text x="683" y="469" font-size="10" fill="#fff" text-anchor="start" textLength="10.2" lengthAdjust="spacingAndGlyphs" >50</text>
<text x="683.7" y="497" font-size="10" fill="#fff" text-anchor="start" textLength="17.8" lengthAdjust="spacingAndGlyphs" >0.00</text>
<text x="683" y="526" font-size="10" fill="#fff" text-anchor="start" textLength="13.2" lengthAdjust="spacingAndGlyphs" >-50</text>
<text x="683" y="543" font-size="10" fill="#fff" text-anchor="start" textLength="13.2" lengthAdjust="spacingAndGlyphs" >-80</text>
<text x="684" y="548" font-size="10" fill="#fff" text-anchor="start" textLength="18.3" lengthAdjust="spacingAndGlyphs" >-100</text>
<text x="12.8" y="564" font-size="10" fill="#fff" text-anchor="start" textLength="46.8" lengthAdjust="spacingAndGlyphs" >7 Dec 2021</text>
<text x="76.8" y="564" font-size="10" fill="#fff" text-anchor="start" textLength="49.3" lengthAdjust="spacingAndGlyphs" >7 Dec 14:00</text>
<text x="140.8" y="564" font-size="10" fill="#fff" text-anchor="start" textLength="49.3" lengthAdjust="spacingAndGlyphs" >7 Dec 22:00</text>
<text x="204.8" y="564" font-size="10" fill="#fff" text-anchor="start" textLength="49.3" lengthAdjust="spacingAndGlyphs" >8 Dec 06:00</text>
<text x="268.8" y="564" font-size="10" fill="#fff" text-anchor="start" textLength="49.3" lengthAdjust="spacingAndGlyphs" >8 Dec 14:00</text>
<text x="332.8" y="564" font-size="10" fill="#fff" text-anchor="start" textLength="49.3" lengthAdjust="spacingAndGlyphs" >8 Dec 22:00</text>
<text x="396.8" y="564" font-size="10" fill="#fff" text-anchor="start" textLength="49.3" lengthAdjust="spacingAndGlyphs" >9 Dec 06:00</text>
<text x="460.8" y="564" font-size="10" fill="#fff" text-anchor="start" textLength="49.3" lengthAdjust="spacingAndGlyphs" >9 Dec 14:00</text>
<text x="524.8" y="564" font-size="10" fill="#fff" text-anchor="start" textLength="49.3" lengthAdjust="spacingAndGlyphs" >9 Dec 22:00</text>
<text x="588.8" y="564" font-size="10" fill="#fff" text-anchor="start" textLength="54.4" lengthAdjust="spacingAndGlyphs" >10 Dec 06:00</text>
<text x="652.8" y="564" font-size="10" fill="#fff" text-anchor="start" textLength="54.4" lengthAdjust="spacingAndGlyphs" >10 Dec 14:00</text>
</g>
<g shape-rendering="crispEdges">
<rect x="11" y="10" width="11" height="8" fill="#fff" stroke="#4585f8" stroke-width="1" transform="translate(.5 .5)"/>
<rect x="14" y="15" width="10" height="8" fill="#fff" stroke="#4585f8" stroke-width="1" transform="translate(.5 .5)"/>
</g>
<path d="M13.2 14.6l1.3-1.4 1.2 1.4M16.8 13.2l1.4 1.6" stroke="#4585f8" stroke-width="1" fill="none"/>
<path d="M16.4 18.2l1.9 3.2 1.3-3 1.4 3 1.2-1.2" stroke="#4585f8" stroke-width="1" fill="none"/>
<rect x="626.5" y="8.5" width="31" height="17" rx="2" fill="url(#btn)" stroke="#56687f" stroke-width="1"/><rect x="627.5" y="9.5" width="29" height="15" rx="1.5" fill="none" stroke="#e6eef8" stroke-width="1" stroke-opacity="0.55"/>
<rect x="661.0" y="8.5" width="30" height="17" rx="2" fill="url(#btn)" stroke="#56687f" stroke-width="1"/><rect x="662.0" y="9.5" width="28" height="15" rx="1.5" fill="none" stroke="#e6eef8" stroke-width="1" stroke-opacity="0.55"/>
<rect x="694.5" y="8.5" width="31" height="17" rx="3" fill="url(#cls)" stroke="#43141f" stroke-width="1"/><rect x="695.5" y="9.5" width="29" height="15" rx="1.5" fill="none" stroke="#f6c8bc" stroke-width="1" stroke-opacity="0.55"/>
<rect x="636.5" y="16.5" width="10.5" height="4" rx="1" fill="#f4f4f4" stroke="#454a5a" stroke-width="1"/>
<rect x="671" y="12.8" width="9.5" height="7.7" rx="0.8" fill="#f4f4f4" stroke="#454a5a" stroke-width="1"/>
<rect x="673.6" y="15.4" width="4.3" height="2.4" fill="#7f9cc4" stroke="#454a5a" stroke-width="0.9"/>
<polygon points="704.2,12.3 707.6,12.3 709.6,14.7 711.6,12.3 715,12.3 711.5,16.4 715,20.5 711.6,20.5 709.6,18.1 707.6,20.5 704.2,20.5 707.7,16.4" fill="#f6f6f6" stroke="#3a4152" stroke-width="1.1" stroke-linejoin="round"/>
</svg>
</body></html>
